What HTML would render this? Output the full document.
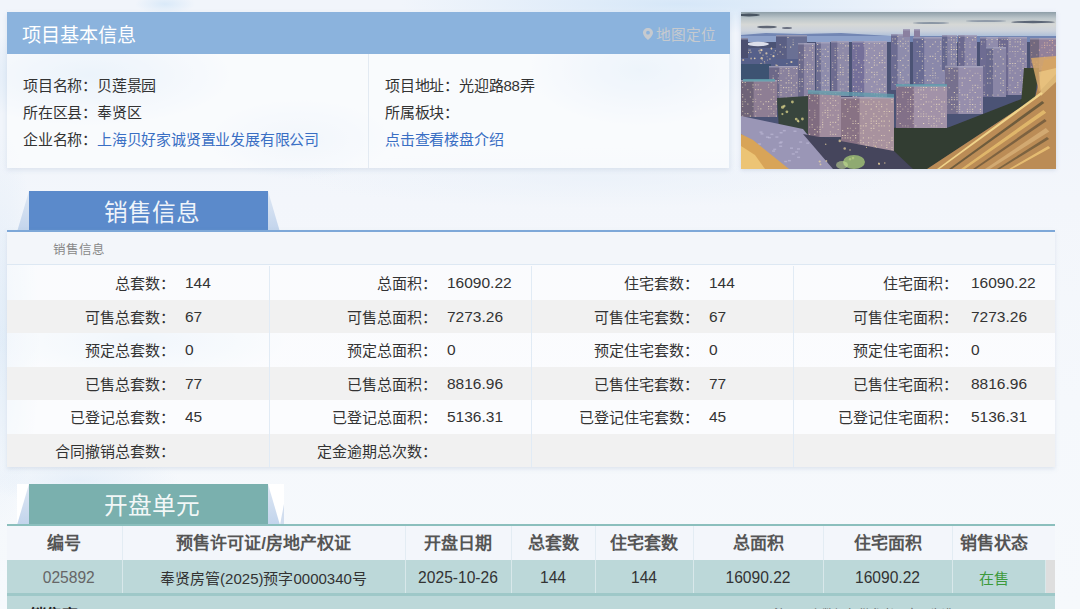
<!DOCTYPE html>
<html lang="zh-CN"><head><meta charset="utf-8">
<style>
*{box-sizing:border-box;margin:0;padding:0}
html,body{width:1080px;height:609px;overflow:hidden}
body{font-family:"Liberation Sans",sans-serif;color:#333;position:relative;
background:#eef4fa;}
.bg{position:absolute;left:0;top:0;width:1080px;height:609px;
background:
radial-gradient(ellipse 30px 10px at 165px 4px,rgba(215,232,248,.9),rgba(215,232,248,0)),
radial-gradient(ellipse 280px 30px at 680px 4px,rgba(214,231,248,1),rgba(214,231,248,0)),
radial-gradient(ellipse 140px 50px at 90px 75px,rgba(205,225,245,.8),rgba(205,225,245,0)),
radial-gradient(ellipse 110px 55px at 640px 70px,rgba(205,225,245,.7),rgba(205,225,245,0)),
radial-gradient(ellipse 90px 40px at 300px 140px,rgba(215,230,246,.6),rgba(215,230,246,0)),
radial-gradient(ellipse 150px 40px at 140px 340px,rgba(210,228,246,.6),rgba(210,228,246,0)),
radial-gradient(ellipse 100px 25px at 80px 480px,rgba(215,230,246,.5),rgba(215,230,246,0)),
radial-gradient(ellipse 40px 200px at 0px 330px,rgba(214,230,246,.6),rgba(214,230,246,0)),
radial-gradient(ellipse 300px 30px at 600px 178px,rgba(232,240,249,.6),rgba(232,240,249,0)),
linear-gradient(180deg,#f1f5fb 0px,#f1f5fb 140px,#f3f6fb 200px,#f5f8fc 400px,#f6f9fc 609px);}
.abs{position:absolute}
/* info card */
.card{left:7px;top:12px;width:723px;height:156px;background:rgba(255,255,255,.55);border-right:1px solid #e4ecf5;box-shadow:0 2px 5px rgba(140,160,190,.22)}
.card .hd{position:absolute;left:0;top:0;width:723px;height:42px;background:#8bb3dd}
.card .hd .t{position:absolute;left:15px;top:12px;font-size:19.2px;color:#fff;line-height:24px}
.card .hd .map{position:absolute;left:636px;top:14px;font-size:14.67px;color:#c6cacf;line-height:18px}
.card .divv{position:absolute;left:361px;top:42px;width:1px;height:114px;background:#e3eaf2}
.ln{position:absolute;font-size:15px;letter-spacing:-0.2px;line-height:18px;color:#333;white-space:nowrap}
.ln a{color:#3a6fc4;text-decoration:none}
.photo{left:741px;top:12px;width:315px;height:157px;overflow:hidden;box-shadow:0 1px 4px rgba(150,170,200,.35)}
/* tabs */
.tab{height:41px;width:280px}
.tab .side{position:absolute;top:0;left:0}
.tab .t{position:absolute;left:24px;width:239px;text-align:center;font-size:23.7px;color:rgba(255,255,255,.92);line-height:30px;top:7px}
/* sales panel */
.panel{left:7px;top:230px;width:1048px;height:237px;background:rgba(255,255,255,.55);border-top:2px solid #7ea8d8;box-shadow:0 2px 4px rgba(150,170,200,.25)}
.sub{position:absolute;left:0;top:0;width:1048px;height:33px;background:#f3f6fa;border-bottom:1px solid #dde8f3}
.sub span{position:absolute;left:46px;top:10px;font-size:12.5px;color:#888;line-height:16px}
table.s{position:absolute;left:0;top:34px;border-collapse:collapse;width:1048px;table-layout:fixed}
table.s td{height:33.5px;font-size:15px;color:#333;white-space:nowrap;padding:0}
table.s tr:nth-child(even) td{background:#f1f1f1}
table.s td.l{text-align:right;padding-right:2px}
table.s td.l4{padding-right:5.5px}
table.s td.v{padding-left:8px;border-right:1px solid #e1ebf5;font-size:15.5px;padding-top:1px}
table.s td.v:last-child{border-right:none}
/* units table */
.units{left:7px;top:524px;width:1048px;height:85px;border-top:2px solid #8bbfbd}
table.u{position:absolute;left:0;top:0;border-collapse:collapse;table-layout:fixed}
table.u th{height:34px;padding-bottom:3px;background:#f3f6fb;font-size:17px;font-weight:bold;color:#555;border-right:1px solid #e3ecf3}
table.u td{height:33px;padding-top:2px;background:#bcd8d9;font-size:15px;color:#333;text-align:center;border-right:1px solid #d8e8ea}
table.u th.sc{border-right:none}
table.u td.n{font-size:15.6px}
table.u td.sc{background:#dedede;border-right:none}
.foot{position:absolute;left:0;top:67px;width:1048px;height:20px;background:#bcd8d9;border-top:3px solid #9ec8c8}
.foot b{position:absolute;left:23px;top:10px;font-size:16px;color:#222;line-height:20px}
.foot span{position:absolute;left:767px;top:9px;font-size:12px;color:#666;line-height:20px}
</style></head><body>
<div class="bg"></div>

<div class="abs card">
  <div class="hd"><div class="t">项目基本信息</div>
    <div class="map"><svg width="10" height="12" viewBox="0 0 10 12" style="vertical-align:0px;margin-right:3px"><path d="M5 0C2.2 0 0 2.1 0 4.8 0 8.2 5 12 5 12s5-3.8 5-7.2C10 2.1 7.8 0 5 0zm0 6.6a1.9 1.9 0 1 1 0-3.8 1.9 1.9 0 0 1 0 3.8z" fill="#c6cacf"/></svg>地图定位</div>
  </div>
  <div class="divv"></div>
  <div class="ln" style="left:16px;top:65px">项目名称：贝莲景园</div>
  <div class="ln" style="left:16px;top:92px">所在区县：奉贤区</div>
  <div class="ln" style="left:16px;top:119px">企业名称：<a>上海贝好家诚贤置业发展有限公司</a></div>
  <div class="ln" style="left:378px;top:65px">项目地址：光迎路88弄</div>
  <div class="ln" style="left:378px;top:92px">所属板块：</div>
  <div class="ln" style="left:378px;top:119px"><a>点击查看楼盘介绍</a></div>
</div>

<div class="abs photo">
<svg width="315" height="157" viewBox="0 0 315 157">
<defs>
<linearGradient id="sky" x1="0" y1="0" x2="0" y2="1">
<stop offset="0" stop-color="#8e9ea8"/><stop offset=".04" stop-color="#bcc6ca"/><stop offset=".08" stop-color="#d6d8d6"/><stop offset=".12" stop-color="#ccd2dc"/><stop offset=".16" stop-color="#a8bcd8"/><stop offset=".2" stop-color="#94acd4"/><stop offset=".24" stop-color="#7a90c0"/><stop offset=".32" stop-color="#56628a"/><stop offset="1" stop-color="#3c3c4e"/>
</linearGradient>
<linearGradient id="rd" x1="1" y1="0" x2="0" y2="1"><stop offset="0" stop-color="#c89a5c"/><stop offset=".5" stop-color="#d8a458"/><stop offset="1" stop-color="#c0905a"/></linearGradient>
<filter id="bl" x="-5%" y="-5%" width="110%" height="110%"><feGaussianBlur stdDeviation="0.5"/></filter>
</defs>
<rect width="315" height="157" fill="url(#sky)"/>
<g filter="url(#bl)">
<ellipse cx="8" cy="3" rx="11" ry="1.4" fill="#4a5562"/>
<ellipse cx="26" cy="15" rx="10" ry="1.3" fill="#5e6674"/>
<ellipse cx="46" cy="16" rx="5" ry="1" fill="#6a7080"/>
<ellipse cx="190" cy="11" rx="18" ry="0.9" fill="#8a96a4"/>
<ellipse cx="245" cy="9" rx="20" ry="0.9" fill="#8f9aa8"/>
<ellipse cx="292" cy="10" rx="22" ry="1.2" fill="#5c6676"/>
<polygon points="0,23 25,21 60,22 100,21 150,24 315,24 315,34 0,34" fill="#7286b4"/>
<rect x="0" y="24" width="150" height="6" fill="#a8bce0" opacity=".5"/>
<rect x="0" y="30" width="315" height="85" fill="#4c5274"/>
<ellipse cx="17" cy="32" rx="11" ry="2.2" fill="#eceef8" opacity=".9"/>
<rect x="0" y="36" width="58" height="18" fill="#56608a"/>
<circle cx="18.1" cy="38.7" r="1.0" fill="#f0d8b0" opacity="0.44"/>
<circle cx="30.0" cy="42.6" r="0.5" fill="#f0d8b0" opacity="0.65"/>
<circle cx="2.1" cy="43.8" r="0.5" fill="#f0d8b0" opacity="0.45"/>
<circle cx="23.8" cy="50.9" r="0.6" fill="#f0d8b0" opacity="0.51"/>
<circle cx="35.1" cy="53.1" r="0.9" fill="#f0d8b0" opacity="0.60"/>
<circle cx="54.7" cy="36.8" r="1.1" fill="#f0d8b0" opacity="0.54"/>
<circle cx="8.1" cy="38.1" r="0.7" fill="#f0d8b0" opacity="0.81"/>
<circle cx="10.1" cy="46.5" r="0.9" fill="#f0d8b0" opacity="0.59"/>
<circle cx="30.7" cy="37.1" r="0.5" fill="#f0d8b0" opacity="0.50"/>
<circle cx="38.1" cy="43.7" r="0.7" fill="#f0d8b0" opacity="0.69"/>
<circle cx="25.4" cy="41.4" r="1.1" fill="#f0d8b0" opacity="0.75"/>
<circle cx="13.7" cy="46.3" r="0.9" fill="#f0d8b0" opacity="0.84"/>
<circle cx="40.8" cy="41.2" r="1.2" fill="#f0d8b0" opacity="0.46"/>
<circle cx="23.4" cy="49.6" r="0.6" fill="#f0d8b0" opacity="0.64"/>
<circle cx="2.2" cy="48.0" r="1.0" fill="#f0d8b0" opacity="0.69"/>
<circle cx="49.0" cy="41.6" r="1.0" fill="#f0d8b0" opacity="0.70"/>
<circle cx="32.5" cy="44.2" r="1.1" fill="#f0d8b0" opacity="0.87"/>
<circle cx="26.5" cy="48.0" r="0.5" fill="#f0d8b0" opacity="0.75"/>
<circle cx="36.2" cy="53.9" r="1.1" fill="#f0d8b0" opacity="0.54"/>
<circle cx="21.6" cy="48.0" r="0.5" fill="#f0d8b0" opacity="0.63"/>
<circle cx="9.4" cy="38.1" r="0.5" fill="#f0d8b0" opacity="0.78"/>
<circle cx="7.2" cy="40.5" r="0.8" fill="#f0d8b0" opacity="0.84"/>
<circle cx="4.5" cy="44.1" r="0.9" fill="#f0d8b0" opacity="0.84"/>
<circle cx="45.9" cy="51.6" r="0.7" fill="#f0d8b0" opacity="0.61"/>
<circle cx="20.1" cy="51.9" r="1.2" fill="#f0d8b0" opacity="0.48"/>
<circle cx="9.9" cy="40.2" r="0.7" fill="#f0d8b0" opacity="0.64"/>
<circle cx="33.0" cy="40.7" r="0.5" fill="#f0d8b0" opacity="0.61"/>
<circle cx="20.7" cy="46.2" r="1.2" fill="#f0d8b0" opacity="0.75"/>
<circle cx="28.9" cy="47.1" r="1.0" fill="#f0d8b0" opacity="0.43"/>
<circle cx="50.4" cy="50.0" r="1.1" fill="#f0d8b0" opacity="0.80"/>
<circle cx="22.0" cy="43.2" r="0.6" fill="#f0d8b0" opacity="0.72"/>
<circle cx="3.5" cy="37.2" r="0.6" fill="#f0d8b0" opacity="0.48"/>
<circle cx="19.0" cy="36.9" r="0.5" fill="#f0d8b0" opacity="0.48"/>
<circle cx="5.7" cy="42.5" r="0.5" fill="#f0d8b0" opacity="0.84"/>
<circle cx="34.4" cy="38.7" r="0.7" fill="#f0d8b0" opacity="0.57"/>
<circle cx="20.4" cy="38.2" r="1.1" fill="#f0d8b0" opacity="0.90"/>
<circle cx="26.1" cy="44.7" r="0.6" fill="#f0d8b0" opacity="0.45"/>
<circle cx="19.2" cy="40.8" r="1.1" fill="#f0d8b0" opacity="0.48"/>
<circle cx="1.3" cy="53.1" r="0.9" fill="#f0d8b0" opacity="0.47"/>
<circle cx="30.4" cy="36.5" r="0.9" fill="#f0d8b0" opacity="0.89"/>
<rect x="0" y="52" width="30" height="16" fill="#3e5272"/>
<rect x="0" y="26" width="7" height="20" fill="#4c5070"/>
<rect x="0" y="26" width="7" height="1.5" fill="#b0b0c8" opacity=".6"/>
<rect x="35" y="23" width="31" height="24" fill="#6a7094"/>
<rect x="35" y="23" width="10.8" height="24" fill="#5a5f84"/>
<rect x="35" y="23" width="31" height="1.5" fill="#b0b0c8" opacity=".6"/>
<rect x="46.4" y="25.0" width="1.2" height="1" fill="#f2e2c0" opacity="0.77"/>
<rect x="51.6" y="27.4" width="1.2" height="1" fill="#f2e2c0" opacity="0.37"/>
<rect x="51.6" y="29.8" width="1.2" height="1" fill="#f2e2c0" opacity="0.46"/>
<rect x="38.6" y="32.2" width="1.2" height="1" fill="#f2e2c0" opacity="0.71"/>
<rect x="51.6" y="32.2" width="1.2" height="1" fill="#f2e2c0" opacity="0.78"/>
<rect x="41.2" y="34.6" width="1.2" height="1" fill="#f2e2c0" opacity="0.42"/>
<rect x="43.8" y="34.6" width="1.2" height="1" fill="#f2e2c0" opacity="0.85"/>
<rect x="49.0" y="34.6" width="1.2" height="1" fill="#f2e2c0" opacity="0.80"/>
<rect x="62.0" y="34.6" width="1.2" height="1" fill="#f2e2c0" opacity="0.36"/>
<rect x="38.6" y="39.4" width="1.2" height="1" fill="#f2e2c0" opacity="0.85"/>
<rect x="64.6" y="39.4" width="1.2" height="1" fill="#f2e2c0" opacity="0.59"/>
<rect x="36.0" y="41.8" width="1.2" height="1" fill="#f2e2c0" opacity="0.35"/>
<rect x="41.2" y="41.8" width="1.2" height="1" fill="#f2e2c0" opacity="0.61"/>
<rect x="59.4" y="41.8" width="1.2" height="1" fill="#f2e2c0" opacity="0.66"/>
<rect x="57" y="31" width="17" height="60" fill="#8c86a4"/>
<rect x="57" y="31" width="5.9" height="60" fill="#6c6a8c"/>
<rect x="57" y="31" width="17" height="1.5" fill="#b0b0c8" opacity=".6"/>
<rect x="71.0" y="33.0" width="1.2" height="1" fill="#f2e2c0" opacity="0.66"/>
<rect x="63.2" y="35.4" width="1.2" height="1" fill="#f2e2c0" opacity="0.42"/>
<rect x="68.4" y="35.4" width="1.2" height="1" fill="#f2e2c0" opacity="0.48"/>
<rect x="71.0" y="35.4" width="1.2" height="1" fill="#f2e2c0" opacity="0.72"/>
<rect x="63.2" y="37.8" width="1.2" height="1" fill="#f2e2c0" opacity="0.74"/>
<rect x="68.4" y="37.8" width="1.2" height="1" fill="#f2e2c0" opacity="0.84"/>
<rect x="58.0" y="40.2" width="1.2" height="1" fill="#f2e2c0" opacity="0.87"/>
<rect x="71.0" y="40.2" width="1.2" height="1" fill="#f2e2c0" opacity="0.59"/>
<rect x="60.6" y="42.6" width="1.2" height="1" fill="#f2e2c0" opacity="0.46"/>
<rect x="63.2" y="42.6" width="1.2" height="1" fill="#f2e2c0" opacity="0.75"/>
<rect x="65.8" y="42.6" width="1.2" height="1" fill="#f2e2c0" opacity="0.65"/>
<rect x="71.0" y="42.6" width="1.2" height="1" fill="#f2e2c0" opacity="0.53"/>
<rect x="63.2" y="45.0" width="1.2" height="1" fill="#f2e2c0" opacity="0.89"/>
<rect x="71.0" y="45.0" width="1.2" height="1" fill="#f2e2c0" opacity="0.50"/>
<rect x="58.0" y="47.4" width="1.2" height="1" fill="#f2e2c0" opacity="0.78"/>
<rect x="60.6" y="47.4" width="1.2" height="1" fill="#f2e2c0" opacity="0.42"/>
<rect x="71.0" y="47.4" width="1.2" height="1" fill="#f2e2c0" opacity="0.43"/>
<rect x="65.8" y="49.8" width="1.2" height="1" fill="#f2e2c0" opacity="0.38"/>
<rect x="58.0" y="52.2" width="1.2" height="1" fill="#f2e2c0" opacity="0.87"/>
<rect x="65.8" y="52.2" width="1.2" height="1" fill="#f2e2c0" opacity="0.82"/>
<rect x="68.4" y="52.2" width="1.2" height="1" fill="#f2e2c0" opacity="0.82"/>
<rect x="58.0" y="54.6" width="1.2" height="1" fill="#f2e2c0" opacity="0.65"/>
<rect x="63.2" y="54.6" width="1.2" height="1" fill="#f2e2c0" opacity="0.42"/>
<rect x="68.4" y="54.6" width="1.2" height="1" fill="#f2e2c0" opacity="0.41"/>
<rect x="71.0" y="54.6" width="1.2" height="1" fill="#f2e2c0" opacity="0.38"/>
<rect x="58.0" y="57.0" width="1.2" height="1" fill="#f2e2c0" opacity="0.52"/>
<rect x="60.6" y="57.0" width="1.2" height="1" fill="#f2e2c0" opacity="0.77"/>
<rect x="63.2" y="57.0" width="1.2" height="1" fill="#f2e2c0" opacity="0.63"/>
<rect x="65.8" y="57.0" width="1.2" height="1" fill="#f2e2c0" opacity="0.54"/>
<rect x="68.4" y="57.0" width="1.2" height="1" fill="#f2e2c0" opacity="0.49"/>
<rect x="71.0" y="57.0" width="1.2" height="1" fill="#f2e2c0" opacity="0.75"/>
<rect x="60.6" y="59.4" width="1.2" height="1" fill="#f2e2c0" opacity="0.61"/>
<rect x="65.8" y="59.4" width="1.2" height="1" fill="#f2e2c0" opacity="0.80"/>
<rect x="71.0" y="61.8" width="1.2" height="1" fill="#f2e2c0" opacity="0.81"/>
<rect x="65.8" y="64.2" width="1.2" height="1" fill="#f2e2c0" opacity="0.38"/>
<rect x="68.4" y="64.2" width="1.2" height="1" fill="#f2e2c0" opacity="0.39"/>
<rect x="58.0" y="66.6" width="1.2" height="1" fill="#f2e2c0" opacity="0.44"/>
<rect x="60.6" y="66.6" width="1.2" height="1" fill="#f2e2c0" opacity="0.81"/>
<rect x="68.4" y="66.6" width="1.2" height="1" fill="#f2e2c0" opacity="0.48"/>
<rect x="71.0" y="66.6" width="1.2" height="1" fill="#f2e2c0" opacity="0.60"/>
<rect x="58.0" y="69.0" width="1.2" height="1" fill="#f2e2c0" opacity="0.60"/>
<rect x="60.6" y="69.0" width="1.2" height="1" fill="#f2e2c0" opacity="0.88"/>
<rect x="68.4" y="69.0" width="1.2" height="1" fill="#f2e2c0" opacity="0.88"/>
<rect x="71.0" y="69.0" width="1.2" height="1" fill="#f2e2c0" opacity="0.55"/>
<rect x="58.0" y="71.4" width="1.2" height="1" fill="#f2e2c0" opacity="0.56"/>
<rect x="65.8" y="71.4" width="1.2" height="1" fill="#f2e2c0" opacity="0.63"/>
<rect x="68.4" y="71.4" width="1.2" height="1" fill="#f2e2c0" opacity="0.50"/>
<rect x="71.0" y="71.4" width="1.2" height="1" fill="#f2e2c0" opacity="0.57"/>
<rect x="58.0" y="73.8" width="1.2" height="1" fill="#f2e2c0" opacity="0.36"/>
<rect x="60.6" y="73.8" width="1.2" height="1" fill="#f2e2c0" opacity="0.48"/>
<rect x="65.8" y="76.2" width="1.2" height="1" fill="#f2e2c0" opacity="0.89"/>
<rect x="68.4" y="76.2" width="1.2" height="1" fill="#f2e2c0" opacity="0.75"/>
<rect x="58.0" y="78.6" width="1.2" height="1" fill="#f2e2c0" opacity="0.81"/>
<rect x="71.0" y="78.6" width="1.2" height="1" fill="#f2e2c0" opacity="0.64"/>
<rect x="63.2" y="83.4" width="1.2" height="1" fill="#f2e2c0" opacity="0.37"/>
<rect x="65.8" y="83.4" width="1.2" height="1" fill="#f2e2c0" opacity="0.55"/>
<rect x="68.4" y="83.4" width="1.2" height="1" fill="#f2e2c0" opacity="0.81"/>
<rect x="68.4" y="85.8" width="1.2" height="1" fill="#f2e2c0" opacity="0.79"/>
<rect x="65.8" y="88.2" width="1.2" height="1" fill="#f2e2c0" opacity="0.76"/>
<rect x="68.4" y="88.2" width="1.2" height="1" fill="#f2e2c0" opacity="0.39"/>
<rect x="71.0" y="88.2" width="1.2" height="1" fill="#f2e2c0" opacity="0.75"/>
<rect x="75" y="30" width="14" height="58" fill="#8e8cac"/>
<rect x="75" y="30" width="4.9" height="58" fill="#6e6e92"/>
<rect x="75" y="30" width="14" height="1.5" fill="#b0b0c8" opacity=".6"/>
<rect x="76.0" y="32.0" width="1.2" height="1" fill="#f2e2c0" opacity="0.76"/>
<rect x="86.4" y="34.4" width="1.2" height="1" fill="#f2e2c0" opacity="0.43"/>
<rect x="76.0" y="36.8" width="1.2" height="1" fill="#f2e2c0" opacity="0.76"/>
<rect x="78.6" y="36.8" width="1.2" height="1" fill="#f2e2c0" opacity="0.66"/>
<rect x="81.2" y="36.8" width="1.2" height="1" fill="#f2e2c0" opacity="0.38"/>
<rect x="83.8" y="36.8" width="1.2" height="1" fill="#f2e2c0" opacity="0.72"/>
<rect x="78.6" y="39.2" width="1.2" height="1" fill="#f2e2c0" opacity="0.63"/>
<rect x="86.4" y="39.2" width="1.2" height="1" fill="#f2e2c0" opacity="0.84"/>
<rect x="76.0" y="41.6" width="1.2" height="1" fill="#f2e2c0" opacity="0.89"/>
<rect x="81.2" y="41.6" width="1.2" height="1" fill="#f2e2c0" opacity="0.60"/>
<rect x="78.6" y="44.0" width="1.2" height="1" fill="#f2e2c0" opacity="0.47"/>
<rect x="83.8" y="44.0" width="1.2" height="1" fill="#f2e2c0" opacity="0.67"/>
<rect x="86.4" y="44.0" width="1.2" height="1" fill="#f2e2c0" opacity="0.64"/>
<rect x="78.6" y="46.4" width="1.2" height="1" fill="#f2e2c0" opacity="0.80"/>
<rect x="76.0" y="48.8" width="1.2" height="1" fill="#f2e2c0" opacity="0.84"/>
<rect x="81.2" y="48.8" width="1.2" height="1" fill="#f2e2c0" opacity="0.35"/>
<rect x="76.0" y="51.2" width="1.2" height="1" fill="#f2e2c0" opacity="0.43"/>
<rect x="78.6" y="51.2" width="1.2" height="1" fill="#f2e2c0" opacity="0.52"/>
<rect x="83.8" y="51.2" width="1.2" height="1" fill="#f2e2c0" opacity="0.76"/>
<rect x="76.0" y="53.6" width="1.2" height="1" fill="#f2e2c0" opacity="0.86"/>
<rect x="83.8" y="53.6" width="1.2" height="1" fill="#f2e2c0" opacity="0.55"/>
<rect x="86.4" y="56.0" width="1.2" height="1" fill="#f2e2c0" opacity="0.38"/>
<rect x="76.0" y="58.4" width="1.2" height="1" fill="#f2e2c0" opacity="0.81"/>
<rect x="78.6" y="58.4" width="1.2" height="1" fill="#f2e2c0" opacity="0.86"/>
<rect x="81.2" y="58.4" width="1.2" height="1" fill="#f2e2c0" opacity="0.50"/>
<rect x="86.4" y="58.4" width="1.2" height="1" fill="#f2e2c0" opacity="0.56"/>
<rect x="83.8" y="63.2" width="1.2" height="1" fill="#f2e2c0" opacity="0.75"/>
<rect x="81.2" y="65.6" width="1.2" height="1" fill="#f2e2c0" opacity="0.38"/>
<rect x="86.4" y="65.6" width="1.2" height="1" fill="#f2e2c0" opacity="0.61"/>
<rect x="76.0" y="68.0" width="1.2" height="1" fill="#f2e2c0" opacity="0.51"/>
<rect x="83.8" y="68.0" width="1.2" height="1" fill="#f2e2c0" opacity="0.71"/>
<rect x="86.4" y="68.0" width="1.2" height="1" fill="#f2e2c0" opacity="0.66"/>
<rect x="78.6" y="70.4" width="1.2" height="1" fill="#f2e2c0" opacity="0.44"/>
<rect x="81.2" y="70.4" width="1.2" height="1" fill="#f2e2c0" opacity="0.85"/>
<rect x="86.4" y="70.4" width="1.2" height="1" fill="#f2e2c0" opacity="0.85"/>
<rect x="81.2" y="72.8" width="1.2" height="1" fill="#f2e2c0" opacity="0.46"/>
<rect x="83.8" y="72.8" width="1.2" height="1" fill="#f2e2c0" opacity="0.54"/>
<rect x="86.4" y="72.8" width="1.2" height="1" fill="#f2e2c0" opacity="0.48"/>
<rect x="76.0" y="75.2" width="1.2" height="1" fill="#f2e2c0" opacity="0.66"/>
<rect x="81.2" y="77.6" width="1.2" height="1" fill="#f2e2c0" opacity="0.38"/>
<rect x="83.8" y="77.6" width="1.2" height="1" fill="#f2e2c0" opacity="0.88"/>
<rect x="86.4" y="77.6" width="1.2" height="1" fill="#f2e2c0" opacity="0.63"/>
<rect x="81.2" y="80.0" width="1.2" height="1" fill="#f2e2c0" opacity="0.50"/>
<rect x="83.8" y="80.0" width="1.2" height="1" fill="#f2e2c0" opacity="0.57"/>
<rect x="83.8" y="82.4" width="1.2" height="1" fill="#f2e2c0" opacity="0.37"/>
<rect x="83.8" y="84.8" width="1.2" height="1" fill="#f2e2c0" opacity="0.57"/>
<rect x="90" y="29" width="18" height="55" fill="#8e8aa8"/>
<rect x="90" y="29" width="6.3" height="55" fill="#6e6c90"/>
<rect x="90" y="29" width="18" height="1.5" fill="#b0b0c8" opacity=".6"/>
<rect x="98.8" y="31.0" width="1.2" height="1" fill="#f2e2c0" opacity="0.41"/>
<rect x="101.4" y="31.0" width="1.2" height="1" fill="#f2e2c0" opacity="0.64"/>
<rect x="104.0" y="33.4" width="1.2" height="1" fill="#f2e2c0" opacity="0.78"/>
<rect x="106.6" y="33.4" width="1.2" height="1" fill="#f2e2c0" opacity="0.86"/>
<rect x="93.6" y="35.8" width="1.2" height="1" fill="#f2e2c0" opacity="0.42"/>
<rect x="96.2" y="35.8" width="1.2" height="1" fill="#f2e2c0" opacity="0.70"/>
<rect x="101.4" y="35.8" width="1.2" height="1" fill="#f2e2c0" opacity="0.39"/>
<rect x="93.6" y="38.2" width="1.2" height="1" fill="#f2e2c0" opacity="0.68"/>
<rect x="96.2" y="38.2" width="1.2" height="1" fill="#f2e2c0" opacity="0.52"/>
<rect x="93.6" y="40.6" width="1.2" height="1" fill="#f2e2c0" opacity="0.49"/>
<rect x="101.4" y="40.6" width="1.2" height="1" fill="#f2e2c0" opacity="0.36"/>
<rect x="93.6" y="43.0" width="1.2" height="1" fill="#f2e2c0" opacity="0.72"/>
<rect x="98.8" y="43.0" width="1.2" height="1" fill="#f2e2c0" opacity="0.37"/>
<rect x="101.4" y="43.0" width="1.2" height="1" fill="#f2e2c0" opacity="0.58"/>
<rect x="106.6" y="43.0" width="1.2" height="1" fill="#f2e2c0" opacity="0.79"/>
<rect x="96.2" y="45.4" width="1.2" height="1" fill="#f2e2c0" opacity="0.88"/>
<rect x="98.8" y="45.4" width="1.2" height="1" fill="#f2e2c0" opacity="0.80"/>
<rect x="101.4" y="45.4" width="1.2" height="1" fill="#f2e2c0" opacity="0.47"/>
<rect x="106.6" y="45.4" width="1.2" height="1" fill="#f2e2c0" opacity="0.87"/>
<rect x="93.6" y="47.8" width="1.2" height="1" fill="#f2e2c0" opacity="0.47"/>
<rect x="104.0" y="47.8" width="1.2" height="1" fill="#f2e2c0" opacity="0.57"/>
<rect x="106.6" y="47.8" width="1.2" height="1" fill="#f2e2c0" opacity="0.89"/>
<rect x="91.0" y="50.2" width="1.2" height="1" fill="#f2e2c0" opacity="0.38"/>
<rect x="93.6" y="50.2" width="1.2" height="1" fill="#f2e2c0" opacity="0.57"/>
<rect x="91.0" y="52.6" width="1.2" height="1" fill="#f2e2c0" opacity="0.45"/>
<rect x="98.8" y="52.6" width="1.2" height="1" fill="#f2e2c0" opacity="0.72"/>
<rect x="106.6" y="52.6" width="1.2" height="1" fill="#f2e2c0" opacity="0.44"/>
<rect x="91.0" y="55.0" width="1.2" height="1" fill="#f2e2c0" opacity="0.50"/>
<rect x="98.8" y="55.0" width="1.2" height="1" fill="#f2e2c0" opacity="0.88"/>
<rect x="101.4" y="55.0" width="1.2" height="1" fill="#f2e2c0" opacity="0.55"/>
<rect x="93.6" y="57.4" width="1.2" height="1" fill="#f2e2c0" opacity="0.61"/>
<rect x="101.4" y="57.4" width="1.2" height="1" fill="#f2e2c0" opacity="0.55"/>
<rect x="106.6" y="57.4" width="1.2" height="1" fill="#f2e2c0" opacity="0.58"/>
<rect x="96.2" y="59.8" width="1.2" height="1" fill="#f2e2c0" opacity="0.37"/>
<rect x="98.8" y="59.8" width="1.2" height="1" fill="#f2e2c0" opacity="0.86"/>
<rect x="101.4" y="59.8" width="1.2" height="1" fill="#f2e2c0" opacity="0.76"/>
<rect x="106.6" y="59.8" width="1.2" height="1" fill="#f2e2c0" opacity="0.50"/>
<rect x="96.2" y="62.2" width="1.2" height="1" fill="#f2e2c0" opacity="0.74"/>
<rect x="98.8" y="62.2" width="1.2" height="1" fill="#f2e2c0" opacity="0.50"/>
<rect x="101.4" y="62.2" width="1.2" height="1" fill="#f2e2c0" opacity="0.77"/>
<rect x="93.6" y="64.6" width="1.2" height="1" fill="#f2e2c0" opacity="0.48"/>
<rect x="106.6" y="64.6" width="1.2" height="1" fill="#f2e2c0" opacity="0.59"/>
<rect x="96.2" y="67.0" width="1.2" height="1" fill="#f2e2c0" opacity="0.79"/>
<rect x="91.0" y="69.4" width="1.2" height="1" fill="#f2e2c0" opacity="0.53"/>
<rect x="98.8" y="69.4" width="1.2" height="1" fill="#f2e2c0" opacity="0.46"/>
<rect x="104.0" y="69.4" width="1.2" height="1" fill="#f2e2c0" opacity="0.39"/>
<rect x="106.6" y="69.4" width="1.2" height="1" fill="#f2e2c0" opacity="0.65"/>
<rect x="91.0" y="71.8" width="1.2" height="1" fill="#f2e2c0" opacity="0.89"/>
<rect x="98.8" y="71.8" width="1.2" height="1" fill="#f2e2c0" opacity="0.40"/>
<rect x="101.4" y="71.8" width="1.2" height="1" fill="#f2e2c0" opacity="0.62"/>
<rect x="91.0" y="74.2" width="1.2" height="1" fill="#f2e2c0" opacity="0.58"/>
<rect x="106.6" y="74.2" width="1.2" height="1" fill="#f2e2c0" opacity="0.81"/>
<rect x="91.0" y="76.6" width="1.2" height="1" fill="#f2e2c0" opacity="0.66"/>
<rect x="98.8" y="76.6" width="1.2" height="1" fill="#f2e2c0" opacity="0.49"/>
<rect x="101.4" y="76.6" width="1.2" height="1" fill="#f2e2c0" opacity="0.43"/>
<rect x="91.0" y="79.0" width="1.2" height="1" fill="#f2e2c0" opacity="0.57"/>
<rect x="98.8" y="79.0" width="1.2" height="1" fill="#f2e2c0" opacity="0.79"/>
<rect x="106.6" y="79.0" width="1.2" height="1" fill="#f2e2c0" opacity="0.61"/>
<rect x="98.8" y="81.4" width="1.2" height="1" fill="#f2e2c0" opacity="0.51"/>
<rect x="101.4" y="81.4" width="1.2" height="1" fill="#f2e2c0" opacity="0.45"/>
<rect x="111" y="29" width="35" height="58" fill="#9690ae"/>
<rect x="111" y="29" width="12.2" height="58" fill="#74709a"/>
<rect x="111" y="29" width="35" height="1.5" fill="#b0b0c8" opacity=".6"/>
<rect x="122.4" y="31.0" width="1.2" height="1" fill="#f2e2c0" opacity="0.78"/>
<rect x="127.6" y="31.0" width="1.2" height="1" fill="#f2e2c0" opacity="0.68"/>
<rect x="132.8" y="31.0" width="1.2" height="1" fill="#f2e2c0" opacity="0.55"/>
<rect x="135.4" y="31.0" width="1.2" height="1" fill="#f2e2c0" opacity="0.46"/>
<rect x="138.0" y="31.0" width="1.2" height="1" fill="#f2e2c0" opacity="0.68"/>
<rect x="143.2" y="31.0" width="1.2" height="1" fill="#f2e2c0" opacity="0.36"/>
<rect x="112.0" y="33.4" width="1.2" height="1" fill="#f2e2c0" opacity="0.72"/>
<rect x="114.6" y="33.4" width="1.2" height="1" fill="#f2e2c0" opacity="0.52"/>
<rect x="117.2" y="33.4" width="1.2" height="1" fill="#f2e2c0" opacity="0.79"/>
<rect x="122.4" y="33.4" width="1.2" height="1" fill="#f2e2c0" opacity="0.41"/>
<rect x="132.8" y="33.4" width="1.2" height="1" fill="#f2e2c0" opacity="0.44"/>
<rect x="140.6" y="33.4" width="1.2" height="1" fill="#f2e2c0" opacity="0.52"/>
<rect x="112.0" y="35.8" width="1.2" height="1" fill="#f2e2c0" opacity="0.66"/>
<rect x="127.6" y="35.8" width="1.2" height="1" fill="#f2e2c0" opacity="0.75"/>
<rect x="130.2" y="35.8" width="1.2" height="1" fill="#f2e2c0" opacity="0.35"/>
<rect x="114.6" y="38.2" width="1.2" height="1" fill="#f2e2c0" opacity="0.36"/>
<rect x="125.0" y="38.2" width="1.2" height="1" fill="#f2e2c0" opacity="0.69"/>
<rect x="132.8" y="38.2" width="1.2" height="1" fill="#f2e2c0" opacity="0.51"/>
<rect x="140.6" y="38.2" width="1.2" height="1" fill="#f2e2c0" opacity="0.62"/>
<rect x="114.6" y="40.6" width="1.2" height="1" fill="#f2e2c0" opacity="0.42"/>
<rect x="125.0" y="40.6" width="1.2" height="1" fill="#f2e2c0" opacity="0.86"/>
<rect x="138.0" y="40.6" width="1.2" height="1" fill="#f2e2c0" opacity="0.78"/>
<rect x="140.6" y="40.6" width="1.2" height="1" fill="#f2e2c0" opacity="0.57"/>
<rect x="114.6" y="43.0" width="1.2" height="1" fill="#f2e2c0" opacity="0.47"/>
<rect x="125.0" y="43.0" width="1.2" height="1" fill="#f2e2c0" opacity="0.49"/>
<rect x="132.8" y="43.0" width="1.2" height="1" fill="#f2e2c0" opacity="0.66"/>
<rect x="138.0" y="43.0" width="1.2" height="1" fill="#f2e2c0" opacity="0.81"/>
<rect x="140.6" y="43.0" width="1.2" height="1" fill="#f2e2c0" opacity="0.68"/>
<rect x="114.6" y="45.4" width="1.2" height="1" fill="#f2e2c0" opacity="0.58"/>
<rect x="130.2" y="45.4" width="1.2" height="1" fill="#f2e2c0" opacity="0.69"/>
<rect x="135.4" y="45.4" width="1.2" height="1" fill="#f2e2c0" opacity="0.77"/>
<rect x="143.2" y="45.4" width="1.2" height="1" fill="#f2e2c0" opacity="0.61"/>
<rect x="112.0" y="47.8" width="1.2" height="1" fill="#f2e2c0" opacity="0.42"/>
<rect x="117.2" y="47.8" width="1.2" height="1" fill="#f2e2c0" opacity="0.59"/>
<rect x="122.4" y="47.8" width="1.2" height="1" fill="#f2e2c0" opacity="0.70"/>
<rect x="125.0" y="47.8" width="1.2" height="1" fill="#f2e2c0" opacity="0.75"/>
<rect x="132.8" y="47.8" width="1.2" height="1" fill="#f2e2c0" opacity="0.63"/>
<rect x="140.6" y="47.8" width="1.2" height="1" fill="#f2e2c0" opacity="0.82"/>
<rect x="117.2" y="50.2" width="1.2" height="1" fill="#f2e2c0" opacity="0.89"/>
<rect x="127.6" y="50.2" width="1.2" height="1" fill="#f2e2c0" opacity="0.78"/>
<rect x="132.8" y="50.2" width="1.2" height="1" fill="#f2e2c0" opacity="0.54"/>
<rect x="138.0" y="50.2" width="1.2" height="1" fill="#f2e2c0" opacity="0.84"/>
<rect x="140.6" y="50.2" width="1.2" height="1" fill="#f2e2c0" opacity="0.80"/>
<rect x="143.2" y="50.2" width="1.2" height="1" fill="#f2e2c0" opacity="0.63"/>
<rect x="114.6" y="52.6" width="1.2" height="1" fill="#f2e2c0" opacity="0.49"/>
<rect x="119.8" y="52.6" width="1.2" height="1" fill="#f2e2c0" opacity="0.37"/>
<rect x="122.4" y="52.6" width="1.2" height="1" fill="#f2e2c0" opacity="0.44"/>
<rect x="132.8" y="52.6" width="1.2" height="1" fill="#f2e2c0" opacity="0.78"/>
<rect x="135.4" y="52.6" width="1.2" height="1" fill="#f2e2c0" opacity="0.64"/>
<rect x="119.8" y="55.0" width="1.2" height="1" fill="#f2e2c0" opacity="0.90"/>
<rect x="130.2" y="55.0" width="1.2" height="1" fill="#f2e2c0" opacity="0.89"/>
<rect x="143.2" y="55.0" width="1.2" height="1" fill="#f2e2c0" opacity="0.76"/>
<rect x="112.0" y="57.4" width="1.2" height="1" fill="#f2e2c0" opacity="0.80"/>
<rect x="114.6" y="57.4" width="1.2" height="1" fill="#f2e2c0" opacity="0.70"/>
<rect x="125.0" y="57.4" width="1.2" height="1" fill="#f2e2c0" opacity="0.35"/>
<rect x="127.6" y="57.4" width="1.2" height="1" fill="#f2e2c0" opacity="0.43"/>
<rect x="140.6" y="57.4" width="1.2" height="1" fill="#f2e2c0" opacity="0.47"/>
<rect x="112.0" y="59.8" width="1.2" height="1" fill="#f2e2c0" opacity="0.35"/>
<rect x="117.2" y="59.8" width="1.2" height="1" fill="#f2e2c0" opacity="0.55"/>
<rect x="119.8" y="59.8" width="1.2" height="1" fill="#f2e2c0" opacity="0.67"/>
<rect x="125.0" y="59.8" width="1.2" height="1" fill="#f2e2c0" opacity="0.69"/>
<rect x="130.2" y="59.8" width="1.2" height="1" fill="#f2e2c0" opacity="0.87"/>
<rect x="132.8" y="59.8" width="1.2" height="1" fill="#f2e2c0" opacity="0.43"/>
<rect x="135.4" y="59.8" width="1.2" height="1" fill="#f2e2c0" opacity="0.70"/>
<rect x="112.0" y="62.2" width="1.2" height="1" fill="#f2e2c0" opacity="0.36"/>
<rect x="132.8" y="62.2" width="1.2" height="1" fill="#f2e2c0" opacity="0.85"/>
<rect x="135.4" y="62.2" width="1.2" height="1" fill="#f2e2c0" opacity="0.64"/>
<rect x="140.6" y="62.2" width="1.2" height="1" fill="#f2e2c0" opacity="0.38"/>
<rect x="112.0" y="64.6" width="1.2" height="1" fill="#f2e2c0" opacity="0.65"/>
<rect x="117.2" y="64.6" width="1.2" height="1" fill="#f2e2c0" opacity="0.46"/>
<rect x="130.2" y="64.6" width="1.2" height="1" fill="#f2e2c0" opacity="0.52"/>
<rect x="132.8" y="64.6" width="1.2" height="1" fill="#f2e2c0" opacity="0.38"/>
<rect x="143.2" y="64.6" width="1.2" height="1" fill="#f2e2c0" opacity="0.81"/>
<rect x="122.4" y="67.0" width="1.2" height="1" fill="#f2e2c0" opacity="0.41"/>
<rect x="125.0" y="67.0" width="1.2" height="1" fill="#f2e2c0" opacity="0.37"/>
<rect x="127.6" y="67.0" width="1.2" height="1" fill="#f2e2c0" opacity="0.76"/>
<rect x="138.0" y="67.0" width="1.2" height="1" fill="#f2e2c0" opacity="0.65"/>
<rect x="114.6" y="69.4" width="1.2" height="1" fill="#f2e2c0" opacity="0.70"/>
<rect x="119.8" y="69.4" width="1.2" height="1" fill="#f2e2c0" opacity="0.83"/>
<rect x="122.4" y="69.4" width="1.2" height="1" fill="#f2e2c0" opacity="0.49"/>
<rect x="125.0" y="69.4" width="1.2" height="1" fill="#f2e2c0" opacity="0.76"/>
<rect x="132.8" y="69.4" width="1.2" height="1" fill="#f2e2c0" opacity="0.83"/>
<rect x="135.4" y="69.4" width="1.2" height="1" fill="#f2e2c0" opacity="0.48"/>
<rect x="135.4" y="71.8" width="1.2" height="1" fill="#f2e2c0" opacity="0.47"/>
<rect x="140.6" y="71.8" width="1.2" height="1" fill="#f2e2c0" opacity="0.85"/>
<rect x="143.2" y="71.8" width="1.2" height="1" fill="#f2e2c0" opacity="0.36"/>
<rect x="112.0" y="74.2" width="1.2" height="1" fill="#f2e2c0" opacity="0.86"/>
<rect x="114.6" y="74.2" width="1.2" height="1" fill="#f2e2c0" opacity="0.43"/>
<rect x="117.2" y="74.2" width="1.2" height="1" fill="#f2e2c0" opacity="0.37"/>
<rect x="130.2" y="74.2" width="1.2" height="1" fill="#f2e2c0" opacity="0.67"/>
<rect x="143.2" y="74.2" width="1.2" height="1" fill="#f2e2c0" opacity="0.83"/>
<rect x="117.2" y="76.6" width="1.2" height="1" fill="#f2e2c0" opacity="0.46"/>
<rect x="119.8" y="76.6" width="1.2" height="1" fill="#f2e2c0" opacity="0.37"/>
<rect x="135.4" y="76.6" width="1.2" height="1" fill="#f2e2c0" opacity="0.40"/>
<rect x="138.0" y="76.6" width="1.2" height="1" fill="#f2e2c0" opacity="0.77"/>
<rect x="140.6" y="76.6" width="1.2" height="1" fill="#f2e2c0" opacity="0.53"/>
<rect x="112.0" y="79.0" width="1.2" height="1" fill="#f2e2c0" opacity="0.49"/>
<rect x="114.6" y="79.0" width="1.2" height="1" fill="#f2e2c0" opacity="0.74"/>
<rect x="119.8" y="79.0" width="1.2" height="1" fill="#f2e2c0" opacity="0.88"/>
<rect x="130.2" y="79.0" width="1.2" height="1" fill="#f2e2c0" opacity="0.58"/>
<rect x="138.0" y="79.0" width="1.2" height="1" fill="#f2e2c0" opacity="0.74"/>
<rect x="143.2" y="79.0" width="1.2" height="1" fill="#f2e2c0" opacity="0.82"/>
<rect x="112.0" y="81.4" width="1.2" height="1" fill="#f2e2c0" opacity="0.80"/>
<rect x="114.6" y="81.4" width="1.2" height="1" fill="#f2e2c0" opacity="0.35"/>
<rect x="117.2" y="81.4" width="1.2" height="1" fill="#f2e2c0" opacity="0.77"/>
<rect x="122.4" y="81.4" width="1.2" height="1" fill="#f2e2c0" opacity="0.62"/>
<rect x="130.2" y="81.4" width="1.2" height="1" fill="#f2e2c0" opacity="0.62"/>
<rect x="132.8" y="81.4" width="1.2" height="1" fill="#f2e2c0" opacity="0.81"/>
<rect x="135.4" y="81.4" width="1.2" height="1" fill="#f2e2c0" opacity="0.87"/>
<rect x="138.0" y="81.4" width="1.2" height="1" fill="#f2e2c0" opacity="0.47"/>
<rect x="112.0" y="83.8" width="1.2" height="1" fill="#f2e2c0" opacity="0.70"/>
<rect x="114.6" y="83.8" width="1.2" height="1" fill="#f2e2c0" opacity="0.78"/>
<rect x="135.4" y="83.8" width="1.2" height="1" fill="#f2e2c0" opacity="0.84"/>
<rect x="138.0" y="83.8" width="1.2" height="1" fill="#f2e2c0" opacity="0.46"/>
<rect x="140.6" y="83.8" width="1.2" height="1" fill="#f2e2c0" opacity="0.85"/>
<rect x="150" y="22" width="19" height="56" fill="#8e8cac"/>
<rect x="150" y="22" width="6.6" height="56" fill="#6c6c92"/>
<rect x="150" y="22" width="19" height="1.5" fill="#b0b0c8" opacity=".6"/>
<rect x="156.2" y="24.0" width="1.2" height="1" fill="#f2e2c0" opacity="0.60"/>
<rect x="151.0" y="26.4" width="1.2" height="1" fill="#f2e2c0" opacity="0.53"/>
<rect x="153.6" y="26.4" width="1.2" height="1" fill="#f2e2c0" opacity="0.81"/>
<rect x="161.4" y="26.4" width="1.2" height="1" fill="#f2e2c0" opacity="0.59"/>
<rect x="151.0" y="28.8" width="1.2" height="1" fill="#f2e2c0" opacity="0.60"/>
<rect x="156.2" y="28.8" width="1.2" height="1" fill="#f2e2c0" opacity="0.46"/>
<rect x="158.8" y="28.8" width="1.2" height="1" fill="#f2e2c0" opacity="0.74"/>
<rect x="164.0" y="28.8" width="1.2" height="1" fill="#f2e2c0" opacity="0.44"/>
<rect x="166.6" y="28.8" width="1.2" height="1" fill="#f2e2c0" opacity="0.53"/>
<rect x="153.6" y="31.2" width="1.2" height="1" fill="#f2e2c0" opacity="0.53"/>
<rect x="156.2" y="31.2" width="1.2" height="1" fill="#f2e2c0" opacity="0.89"/>
<rect x="161.4" y="31.2" width="1.2" height="1" fill="#f2e2c0" opacity="0.88"/>
<rect x="164.0" y="31.2" width="1.2" height="1" fill="#f2e2c0" opacity="0.56"/>
<rect x="158.8" y="33.6" width="1.2" height="1" fill="#f2e2c0" opacity="0.70"/>
<rect x="161.4" y="33.6" width="1.2" height="1" fill="#f2e2c0" opacity="0.46"/>
<rect x="166.6" y="33.6" width="1.2" height="1" fill="#f2e2c0" opacity="0.57"/>
<rect x="164.0" y="36.0" width="1.2" height="1" fill="#f2e2c0" opacity="0.68"/>
<rect x="166.6" y="38.4" width="1.2" height="1" fill="#f2e2c0" opacity="0.75"/>
<rect x="151.0" y="43.2" width="1.2" height="1" fill="#f2e2c0" opacity="0.70"/>
<rect x="153.6" y="43.2" width="1.2" height="1" fill="#f2e2c0" opacity="0.58"/>
<rect x="164.0" y="43.2" width="1.2" height="1" fill="#f2e2c0" opacity="0.58"/>
<rect x="161.4" y="45.6" width="1.2" height="1" fill="#f2e2c0" opacity="0.71"/>
<rect x="156.2" y="48.0" width="1.2" height="1" fill="#f2e2c0" opacity="0.65"/>
<rect x="158.8" y="48.0" width="1.2" height="1" fill="#f2e2c0" opacity="0.78"/>
<rect x="166.6" y="48.0" width="1.2" height="1" fill="#f2e2c0" opacity="0.67"/>
<rect x="153.6" y="52.8" width="1.2" height="1" fill="#f2e2c0" opacity="0.73"/>
<rect x="161.4" y="52.8" width="1.2" height="1" fill="#f2e2c0" opacity="0.89"/>
<rect x="166.6" y="52.8" width="1.2" height="1" fill="#f2e2c0" opacity="0.50"/>
<rect x="153.6" y="55.2" width="1.2" height="1" fill="#f2e2c0" opacity="0.58"/>
<rect x="164.0" y="55.2" width="1.2" height="1" fill="#f2e2c0" opacity="0.47"/>
<rect x="156.2" y="57.6" width="1.2" height="1" fill="#f2e2c0" opacity="0.79"/>
<rect x="161.4" y="57.6" width="1.2" height="1" fill="#f2e2c0" opacity="0.42"/>
<rect x="158.8" y="60.0" width="1.2" height="1" fill="#f2e2c0" opacity="0.88"/>
<rect x="156.2" y="62.4" width="1.2" height="1" fill="#f2e2c0" opacity="0.65"/>
<rect x="158.8" y="62.4" width="1.2" height="1" fill="#f2e2c0" opacity="0.81"/>
<rect x="166.6" y="62.4" width="1.2" height="1" fill="#f2e2c0" opacity="0.56"/>
<rect x="151.0" y="64.8" width="1.2" height="1" fill="#f2e2c0" opacity="0.58"/>
<rect x="153.6" y="64.8" width="1.2" height="1" fill="#f2e2c0" opacity="0.35"/>
<rect x="158.8" y="64.8" width="1.2" height="1" fill="#f2e2c0" opacity="0.48"/>
<rect x="161.4" y="64.8" width="1.2" height="1" fill="#f2e2c0" opacity="0.61"/>
<rect x="161.4" y="67.2" width="1.2" height="1" fill="#f2e2c0" opacity="0.81"/>
<rect x="151.0" y="69.6" width="1.2" height="1" fill="#f2e2c0" opacity="0.81"/>
<rect x="156.2" y="69.6" width="1.2" height="1" fill="#f2e2c0" opacity="0.36"/>
<rect x="164.0" y="69.6" width="1.2" height="1" fill="#f2e2c0" opacity="0.41"/>
<rect x="166.6" y="69.6" width="1.2" height="1" fill="#f2e2c0" opacity="0.48"/>
<rect x="153.6" y="72.0" width="1.2" height="1" fill="#f2e2c0" opacity="0.43"/>
<rect x="161.4" y="72.0" width="1.2" height="1" fill="#f2e2c0" opacity="0.84"/>
<rect x="161.4" y="74.4" width="1.2" height="1" fill="#f2e2c0" opacity="0.73"/>
<rect x="158.8" y="76.8" width="1.2" height="1" fill="#f2e2c0" opacity="0.48"/>
<rect x="161.4" y="76.8" width="1.2" height="1" fill="#f2e2c0" opacity="0.62"/>
<rect x="164.0" y="76.8" width="1.2" height="1" fill="#f2e2c0" opacity="0.61"/>
<rect x="166.6" y="76.8" width="1.2" height="1" fill="#f2e2c0" opacity="0.62"/>
<rect x="162" y="17" width="7" height="8" fill="#8a80a0"/>
<rect x="162" y="17" width="7" height="1.5" fill="#b0b0c8" opacity=".6"/>
<rect x="173" y="17" width="6" height="8" fill="#8a80a0"/>
<rect x="173" y="17" width="6" height="1.5" fill="#b0b0c8" opacity=".6"/>
<rect x="172" y="25" width="32" height="48" fill="#8a88aa"/>
<rect x="172" y="25" width="11.2" height="48" fill="#6a6c94"/>
<rect x="172" y="25" width="32" height="1.5" fill="#b0b0c8" opacity=".6"/>
<rect x="180.8" y="27.0" width="1.2" height="1" fill="#f2e2c0" opacity="0.81"/>
<rect x="201.6" y="27.0" width="1.2" height="1" fill="#f2e2c0" opacity="0.70"/>
<rect x="175.6" y="29.4" width="1.2" height="1" fill="#f2e2c0" opacity="0.69"/>
<rect x="183.4" y="29.4" width="1.2" height="1" fill="#f2e2c0" opacity="0.89"/>
<rect x="193.8" y="29.4" width="1.2" height="1" fill="#f2e2c0" opacity="0.75"/>
<rect x="199.0" y="29.4" width="1.2" height="1" fill="#f2e2c0" opacity="0.82"/>
<rect x="180.8" y="31.8" width="1.2" height="1" fill="#f2e2c0" opacity="0.59"/>
<rect x="191.2" y="31.8" width="1.2" height="1" fill="#f2e2c0" opacity="0.81"/>
<rect x="199.0" y="31.8" width="1.2" height="1" fill="#f2e2c0" opacity="0.63"/>
<rect x="178.2" y="34.2" width="1.2" height="1" fill="#f2e2c0" opacity="0.52"/>
<rect x="180.8" y="34.2" width="1.2" height="1" fill="#f2e2c0" opacity="0.67"/>
<rect x="188.6" y="34.2" width="1.2" height="1" fill="#f2e2c0" opacity="0.75"/>
<rect x="196.4" y="34.2" width="1.2" height="1" fill="#f2e2c0" opacity="0.52"/>
<rect x="199.0" y="34.2" width="1.2" height="1" fill="#f2e2c0" opacity="0.45"/>
<rect x="199.0" y="36.6" width="1.2" height="1" fill="#f2e2c0" opacity="0.72"/>
<rect x="175.6" y="39.0" width="1.2" height="1" fill="#f2e2c0" opacity="0.45"/>
<rect x="178.2" y="39.0" width="1.2" height="1" fill="#f2e2c0" opacity="0.78"/>
<rect x="196.4" y="39.0" width="1.2" height="1" fill="#f2e2c0" opacity="0.52"/>
<rect x="201.6" y="39.0" width="1.2" height="1" fill="#f2e2c0" opacity="0.59"/>
<rect x="178.2" y="41.4" width="1.2" height="1" fill="#f2e2c0" opacity="0.66"/>
<rect x="180.8" y="41.4" width="1.2" height="1" fill="#f2e2c0" opacity="0.42"/>
<rect x="193.8" y="41.4" width="1.2" height="1" fill="#f2e2c0" opacity="0.56"/>
<rect x="178.2" y="43.8" width="1.2" height="1" fill="#f2e2c0" opacity="0.70"/>
<rect x="180.8" y="43.8" width="1.2" height="1" fill="#f2e2c0" opacity="0.43"/>
<rect x="183.4" y="43.8" width="1.2" height="1" fill="#f2e2c0" opacity="0.35"/>
<rect x="188.6" y="43.8" width="1.2" height="1" fill="#f2e2c0" opacity="0.88"/>
<rect x="191.2" y="43.8" width="1.2" height="1" fill="#f2e2c0" opacity="0.83"/>
<rect x="193.8" y="43.8" width="1.2" height="1" fill="#f2e2c0" opacity="0.36"/>
<rect x="199.0" y="43.8" width="1.2" height="1" fill="#f2e2c0" opacity="0.75"/>
<rect x="201.6" y="43.8" width="1.2" height="1" fill="#f2e2c0" opacity="0.38"/>
<rect x="183.4" y="46.2" width="1.2" height="1" fill="#f2e2c0" opacity="0.70"/>
<rect x="193.8" y="46.2" width="1.2" height="1" fill="#f2e2c0" opacity="0.88"/>
<rect x="199.0" y="46.2" width="1.2" height="1" fill="#f2e2c0" opacity="0.36"/>
<rect x="175.6" y="48.6" width="1.2" height="1" fill="#f2e2c0" opacity="0.52"/>
<rect x="180.8" y="48.6" width="1.2" height="1" fill="#f2e2c0" opacity="0.82"/>
<rect x="186.0" y="48.6" width="1.2" height="1" fill="#f2e2c0" opacity="0.55"/>
<rect x="196.4" y="48.6" width="1.2" height="1" fill="#f2e2c0" opacity="0.79"/>
<rect x="191.2" y="51.0" width="1.2" height="1" fill="#f2e2c0" opacity="0.38"/>
<rect x="201.6" y="51.0" width="1.2" height="1" fill="#f2e2c0" opacity="0.68"/>
<rect x="180.8" y="53.4" width="1.2" height="1" fill="#f2e2c0" opacity="0.59"/>
<rect x="199.0" y="53.4" width="1.2" height="1" fill="#f2e2c0" opacity="0.35"/>
<rect x="201.6" y="53.4" width="1.2" height="1" fill="#f2e2c0" opacity="0.58"/>
<rect x="180.8" y="55.8" width="1.2" height="1" fill="#f2e2c0" opacity="0.81"/>
<rect x="191.2" y="55.8" width="1.2" height="1" fill="#f2e2c0" opacity="0.82"/>
<rect x="201.6" y="55.8" width="1.2" height="1" fill="#f2e2c0" opacity="0.40"/>
<rect x="178.2" y="58.2" width="1.2" height="1" fill="#f2e2c0" opacity="0.76"/>
<rect x="183.4" y="58.2" width="1.2" height="1" fill="#f2e2c0" opacity="0.68"/>
<rect x="191.2" y="58.2" width="1.2" height="1" fill="#f2e2c0" opacity="0.49"/>
<rect x="201.6" y="58.2" width="1.2" height="1" fill="#f2e2c0" opacity="0.79"/>
<rect x="175.6" y="60.6" width="1.2" height="1" fill="#f2e2c0" opacity="0.67"/>
<rect x="191.2" y="60.6" width="1.2" height="1" fill="#f2e2c0" opacity="0.46"/>
<rect x="193.8" y="60.6" width="1.2" height="1" fill="#f2e2c0" opacity="0.74"/>
<rect x="175.6" y="63.0" width="1.2" height="1" fill="#f2e2c0" opacity="0.37"/>
<rect x="183.4" y="63.0" width="1.2" height="1" fill="#f2e2c0" opacity="0.70"/>
<rect x="188.6" y="63.0" width="1.2" height="1" fill="#f2e2c0" opacity="0.68"/>
<rect x="191.2" y="63.0" width="1.2" height="1" fill="#f2e2c0" opacity="0.64"/>
<rect x="193.8" y="63.0" width="1.2" height="1" fill="#f2e2c0" opacity="0.37"/>
<rect x="175.6" y="65.4" width="1.2" height="1" fill="#f2e2c0" opacity="0.78"/>
<rect x="191.2" y="65.4" width="1.2" height="1" fill="#f2e2c0" opacity="0.37"/>
<rect x="193.8" y="65.4" width="1.2" height="1" fill="#f2e2c0" opacity="0.45"/>
<rect x="196.4" y="65.4" width="1.2" height="1" fill="#f2e2c0" opacity="0.38"/>
<rect x="180.8" y="67.8" width="1.2" height="1" fill="#f2e2c0" opacity="0.68"/>
<rect x="186.0" y="67.8" width="1.2" height="1" fill="#f2e2c0" opacity="0.88"/>
<rect x="188.6" y="67.8" width="1.2" height="1" fill="#f2e2c0" opacity="0.66"/>
<rect x="173.0" y="70.2" width="1.2" height="1" fill="#f2e2c0" opacity="0.88"/>
<rect x="178.2" y="70.2" width="1.2" height="1" fill="#f2e2c0" opacity="0.37"/>
<rect x="180.8" y="70.2" width="1.2" height="1" fill="#f2e2c0" opacity="0.54"/>
<rect x="191.2" y="70.2" width="1.2" height="1" fill="#f2e2c0" opacity="0.78"/>
<rect x="201.6" y="70.2" width="1.2" height="1" fill="#f2e2c0" opacity="0.43"/>
<rect x="201" y="23" width="15" height="35" fill="#8684a6"/>
<rect x="201" y="23" width="5.2" height="35" fill="#66688e"/>
<rect x="201" y="23" width="15" height="1.5" fill="#b0b0c8" opacity=".6"/>
<rect x="209.8" y="25.0" width="1.2" height="1" fill="#f2e2c0" opacity="0.68"/>
<rect x="215.0" y="25.0" width="1.2" height="1" fill="#f2e2c0" opacity="0.53"/>
<rect x="202.0" y="27.4" width="1.2" height="1" fill="#f2e2c0" opacity="0.42"/>
<rect x="207.2" y="27.4" width="1.2" height="1" fill="#f2e2c0" opacity="0.48"/>
<rect x="209.8" y="27.4" width="1.2" height="1" fill="#f2e2c0" opacity="0.72"/>
<rect x="212.4" y="27.4" width="1.2" height="1" fill="#f2e2c0" opacity="0.74"/>
<rect x="215.0" y="27.4" width="1.2" height="1" fill="#f2e2c0" opacity="0.37"/>
<rect x="204.6" y="29.8" width="1.2" height="1" fill="#f2e2c0" opacity="0.86"/>
<rect x="212.4" y="29.8" width="1.2" height="1" fill="#f2e2c0" opacity="0.60"/>
<rect x="215.0" y="29.8" width="1.2" height="1" fill="#f2e2c0" opacity="0.86"/>
<rect x="209.8" y="32.2" width="1.2" height="1" fill="#f2e2c0" opacity="0.80"/>
<rect x="202.0" y="34.6" width="1.2" height="1" fill="#f2e2c0" opacity="0.47"/>
<rect x="204.6" y="34.6" width="1.2" height="1" fill="#f2e2c0" opacity="0.74"/>
<rect x="209.8" y="34.6" width="1.2" height="1" fill="#f2e2c0" opacity="0.83"/>
<rect x="212.4" y="34.6" width="1.2" height="1" fill="#f2e2c0" opacity="0.58"/>
<rect x="215.0" y="34.6" width="1.2" height="1" fill="#f2e2c0" opacity="0.50"/>
<rect x="204.6" y="37.0" width="1.2" height="1" fill="#f2e2c0" opacity="0.44"/>
<rect x="209.8" y="37.0" width="1.2" height="1" fill="#f2e2c0" opacity="0.85"/>
<rect x="212.4" y="37.0" width="1.2" height="1" fill="#f2e2c0" opacity="0.89"/>
<rect x="215.0" y="37.0" width="1.2" height="1" fill="#f2e2c0" opacity="0.84"/>
<rect x="204.6" y="39.4" width="1.2" height="1" fill="#f2e2c0" opacity="0.61"/>
<rect x="207.2" y="39.4" width="1.2" height="1" fill="#f2e2c0" opacity="0.49"/>
<rect x="209.8" y="39.4" width="1.2" height="1" fill="#f2e2c0" opacity="0.55"/>
<rect x="204.6" y="41.8" width="1.2" height="1" fill="#f2e2c0" opacity="0.51"/>
<rect x="209.8" y="41.8" width="1.2" height="1" fill="#f2e2c0" opacity="0.75"/>
<rect x="212.4" y="41.8" width="1.2" height="1" fill="#f2e2c0" opacity="0.89"/>
<rect x="215.0" y="41.8" width="1.2" height="1" fill="#f2e2c0" opacity="0.79"/>
<rect x="202.0" y="44.2" width="1.2" height="1" fill="#f2e2c0" opacity="0.43"/>
<rect x="204.6" y="44.2" width="1.2" height="1" fill="#f2e2c0" opacity="0.81"/>
<rect x="209.8" y="44.2" width="1.2" height="1" fill="#f2e2c0" opacity="0.59"/>
<rect x="215.0" y="44.2" width="1.2" height="1" fill="#f2e2c0" opacity="0.66"/>
<rect x="202.0" y="46.6" width="1.2" height="1" fill="#f2e2c0" opacity="0.45"/>
<rect x="209.8" y="46.6" width="1.2" height="1" fill="#f2e2c0" opacity="0.39"/>
<rect x="212.4" y="46.6" width="1.2" height="1" fill="#f2e2c0" opacity="0.68"/>
<rect x="202.0" y="49.0" width="1.2" height="1" fill="#f2e2c0" opacity="0.46"/>
<rect x="215.0" y="49.0" width="1.2" height="1" fill="#f2e2c0" opacity="0.39"/>
<rect x="209.8" y="51.4" width="1.2" height="1" fill="#f2e2c0" opacity="0.80"/>
<rect x="212.4" y="51.4" width="1.2" height="1" fill="#f2e2c0" opacity="0.81"/>
<rect x="204.6" y="53.8" width="1.2" height="1" fill="#f2e2c0" opacity="0.85"/>
<rect x="212.4" y="53.8" width="1.2" height="1" fill="#f2e2c0" opacity="0.45"/>
<rect x="204.6" y="56.2" width="1.2" height="1" fill="#f2e2c0" opacity="0.55"/>
<rect x="209.8" y="56.2" width="1.2" height="1" fill="#f2e2c0" opacity="0.64"/>
<rect x="217" y="23" width="19" height="35" fill="#8c88aa"/>
<rect x="217" y="23" width="6.6" height="35" fill="#6c6a90"/>
<rect x="217" y="23" width="19" height="1.5" fill="#b0b0c8" opacity=".6"/>
<rect x="218.0" y="25.0" width="1.2" height="1" fill="#f2e2c0" opacity="0.74"/>
<rect x="225.8" y="25.0" width="1.2" height="1" fill="#f2e2c0" opacity="0.74"/>
<rect x="233.6" y="25.0" width="1.2" height="1" fill="#f2e2c0" opacity="0.83"/>
<rect x="231.0" y="27.4" width="1.2" height="1" fill="#f2e2c0" opacity="0.88"/>
<rect x="233.6" y="27.4" width="1.2" height="1" fill="#f2e2c0" opacity="0.45"/>
<rect x="218.0" y="29.8" width="1.2" height="1" fill="#f2e2c0" opacity="0.49"/>
<rect x="223.2" y="29.8" width="1.2" height="1" fill="#f2e2c0" opacity="0.40"/>
<rect x="228.4" y="29.8" width="1.2" height="1" fill="#f2e2c0" opacity="0.36"/>
<rect x="223.2" y="32.2" width="1.2" height="1" fill="#f2e2c0" opacity="0.83"/>
<rect x="228.4" y="32.2" width="1.2" height="1" fill="#f2e2c0" opacity="0.42"/>
<rect x="218.0" y="34.6" width="1.2" height="1" fill="#f2e2c0" opacity="0.42"/>
<rect x="223.2" y="34.6" width="1.2" height="1" fill="#f2e2c0" opacity="0.68"/>
<rect x="228.4" y="34.6" width="1.2" height="1" fill="#f2e2c0" opacity="0.67"/>
<rect x="233.6" y="34.6" width="1.2" height="1" fill="#f2e2c0" opacity="0.80"/>
<rect x="220.6" y="39.4" width="1.2" height="1" fill="#f2e2c0" opacity="0.48"/>
<rect x="223.2" y="39.4" width="1.2" height="1" fill="#f2e2c0" opacity="0.59"/>
<rect x="220.6" y="41.8" width="1.2" height="1" fill="#f2e2c0" opacity="0.63"/>
<rect x="228.4" y="41.8" width="1.2" height="1" fill="#f2e2c0" opacity="0.58"/>
<rect x="220.6" y="44.2" width="1.2" height="1" fill="#f2e2c0" opacity="0.59"/>
<rect x="225.8" y="44.2" width="1.2" height="1" fill="#f2e2c0" opacity="0.43"/>
<rect x="228.4" y="46.6" width="1.2" height="1" fill="#f2e2c0" opacity="0.70"/>
<rect x="231.0" y="46.6" width="1.2" height="1" fill="#f2e2c0" opacity="0.72"/>
<rect x="233.6" y="46.6" width="1.2" height="1" fill="#f2e2c0" opacity="0.65"/>
<rect x="223.2" y="49.0" width="1.2" height="1" fill="#f2e2c0" opacity="0.64"/>
<rect x="231.0" y="49.0" width="1.2" height="1" fill="#f2e2c0" opacity="0.52"/>
<rect x="218.0" y="51.4" width="1.2" height="1" fill="#f2e2c0" opacity="0.68"/>
<rect x="225.8" y="51.4" width="1.2" height="1" fill="#f2e2c0" opacity="0.61"/>
<rect x="231.0" y="51.4" width="1.2" height="1" fill="#f2e2c0" opacity="0.42"/>
<rect x="233.6" y="51.4" width="1.2" height="1" fill="#f2e2c0" opacity="0.51"/>
<rect x="220.6" y="53.8" width="1.2" height="1" fill="#f2e2c0" opacity="0.48"/>
<rect x="223.2" y="53.8" width="1.2" height="1" fill="#f2e2c0" opacity="0.65"/>
<rect x="218.0" y="56.2" width="1.2" height="1" fill="#f2e2c0" opacity="0.74"/>
<rect x="231.0" y="56.2" width="1.2" height="1" fill="#f2e2c0" opacity="0.48"/>
<rect x="233.6" y="56.2" width="1.2" height="1" fill="#f2e2c0" opacity="0.63"/>
<rect x="239" y="25" width="18" height="60" fill="#908cac"/>
<rect x="239" y="25" width="6.3" height="60" fill="#6e6c92"/>
<rect x="239" y="25" width="18" height="1.5" fill="#b0b0c8" opacity=".6"/>
<rect x="245.2" y="27.0" width="1.2" height="1" fill="#f2e2c0" opacity="0.54"/>
<rect x="250.4" y="27.0" width="1.2" height="1" fill="#f2e2c0" opacity="0.66"/>
<rect x="255.6" y="27.0" width="1.2" height="1" fill="#f2e2c0" opacity="0.89"/>
<rect x="240.0" y="29.4" width="1.2" height="1" fill="#f2e2c0" opacity="0.77"/>
<rect x="242.6" y="29.4" width="1.2" height="1" fill="#f2e2c0" opacity="0.39"/>
<rect x="250.4" y="29.4" width="1.2" height="1" fill="#f2e2c0" opacity="0.56"/>
<rect x="240.0" y="31.8" width="1.2" height="1" fill="#f2e2c0" opacity="0.47"/>
<rect x="247.8" y="31.8" width="1.2" height="1" fill="#f2e2c0" opacity="0.54"/>
<rect x="247.8" y="36.6" width="1.2" height="1" fill="#f2e2c0" opacity="0.83"/>
<rect x="250.4" y="36.6" width="1.2" height="1" fill="#f2e2c0" opacity="0.77"/>
<rect x="247.8" y="41.4" width="1.2" height="1" fill="#f2e2c0" opacity="0.56"/>
<rect x="255.6" y="41.4" width="1.2" height="1" fill="#f2e2c0" opacity="0.78"/>
<rect x="247.8" y="43.8" width="1.2" height="1" fill="#f2e2c0" opacity="0.52"/>
<rect x="250.4" y="43.8" width="1.2" height="1" fill="#f2e2c0" opacity="0.67"/>
<rect x="255.6" y="43.8" width="1.2" height="1" fill="#f2e2c0" opacity="0.86"/>
<rect x="240.0" y="46.2" width="1.2" height="1" fill="#f2e2c0" opacity="0.81"/>
<rect x="247.8" y="46.2" width="1.2" height="1" fill="#f2e2c0" opacity="0.58"/>
<rect x="253.0" y="46.2" width="1.2" height="1" fill="#f2e2c0" opacity="0.38"/>
<rect x="242.6" y="53.4" width="1.2" height="1" fill="#f2e2c0" opacity="0.56"/>
<rect x="250.4" y="55.8" width="1.2" height="1" fill="#f2e2c0" opacity="0.64"/>
<rect x="255.6" y="55.8" width="1.2" height="1" fill="#f2e2c0" opacity="0.52"/>
<rect x="247.8" y="58.2" width="1.2" height="1" fill="#f2e2c0" opacity="0.84"/>
<rect x="245.2" y="60.6" width="1.2" height="1" fill="#f2e2c0" opacity="0.51"/>
<rect x="253.0" y="60.6" width="1.2" height="1" fill="#f2e2c0" opacity="0.45"/>
<rect x="250.4" y="63.0" width="1.2" height="1" fill="#f2e2c0" opacity="0.58"/>
<rect x="255.6" y="63.0" width="1.2" height="1" fill="#f2e2c0" opacity="0.73"/>
<rect x="240.0" y="65.4" width="1.2" height="1" fill="#f2e2c0" opacity="0.52"/>
<rect x="250.4" y="65.4" width="1.2" height="1" fill="#f2e2c0" opacity="0.62"/>
<rect x="255.6" y="65.4" width="1.2" height="1" fill="#f2e2c0" opacity="0.71"/>
<rect x="250.4" y="67.8" width="1.2" height="1" fill="#f2e2c0" opacity="0.44"/>
<rect x="255.6" y="67.8" width="1.2" height="1" fill="#f2e2c0" opacity="0.41"/>
<rect x="240.0" y="70.2" width="1.2" height="1" fill="#f2e2c0" opacity="0.64"/>
<rect x="250.4" y="70.2" width="1.2" height="1" fill="#f2e2c0" opacity="0.36"/>
<rect x="255.6" y="70.2" width="1.2" height="1" fill="#f2e2c0" opacity="0.74"/>
<rect x="242.6" y="72.6" width="1.2" height="1" fill="#f2e2c0" opacity="0.50"/>
<rect x="245.2" y="72.6" width="1.2" height="1" fill="#f2e2c0" opacity="0.85"/>
<rect x="250.4" y="72.6" width="1.2" height="1" fill="#f2e2c0" opacity="0.60"/>
<rect x="255.6" y="72.6" width="1.2" height="1" fill="#f2e2c0" opacity="0.84"/>
<rect x="250.4" y="75.0" width="1.2" height="1" fill="#f2e2c0" opacity="0.37"/>
<rect x="240.0" y="77.4" width="1.2" height="1" fill="#f2e2c0" opacity="0.84"/>
<rect x="245.2" y="77.4" width="1.2" height="1" fill="#f2e2c0" opacity="0.68"/>
<rect x="255.6" y="77.4" width="1.2" height="1" fill="#f2e2c0" opacity="0.56"/>
<rect x="242.6" y="79.8" width="1.2" height="1" fill="#f2e2c0" opacity="0.52"/>
<rect x="253.0" y="79.8" width="1.2" height="1" fill="#f2e2c0" opacity="0.45"/>
<rect x="240.0" y="82.2" width="1.2" height="1" fill="#f2e2c0" opacity="0.88"/>
<rect x="242.6" y="82.2" width="1.2" height="1" fill="#f2e2c0" opacity="0.66"/>
<rect x="245.2" y="82.2" width="1.2" height="1" fill="#f2e2c0" opacity="0.64"/>
<rect x="253.0" y="82.2" width="1.2" height="1" fill="#f2e2c0" opacity="0.42"/>
<rect x="257" y="25" width="29" height="58" fill="#8e88a8"/>
<rect x="257" y="25" width="10.1" height="58" fill="#6e6a90"/>
<rect x="257" y="25" width="29" height="1.5" fill="#b0b0c8" opacity=".6"/>
<rect x="260.6" y="27.0" width="1.2" height="1" fill="#f2e2c0" opacity="0.46"/>
<rect x="263.2" y="27.0" width="1.2" height="1" fill="#f2e2c0" opacity="0.48"/>
<rect x="265.8" y="27.0" width="1.2" height="1" fill="#f2e2c0" opacity="0.72"/>
<rect x="268.4" y="27.0" width="1.2" height="1" fill="#f2e2c0" opacity="0.44"/>
<rect x="273.6" y="27.0" width="1.2" height="1" fill="#f2e2c0" opacity="0.50"/>
<rect x="278.8" y="27.0" width="1.2" height="1" fill="#f2e2c0" opacity="0.59"/>
<rect x="258.0" y="29.4" width="1.2" height="1" fill="#f2e2c0" opacity="0.54"/>
<rect x="268.4" y="29.4" width="1.2" height="1" fill="#f2e2c0" opacity="0.87"/>
<rect x="273.6" y="29.4" width="1.2" height="1" fill="#f2e2c0" opacity="0.60"/>
<rect x="276.2" y="29.4" width="1.2" height="1" fill="#f2e2c0" opacity="0.74"/>
<rect x="278.8" y="29.4" width="1.2" height="1" fill="#f2e2c0" opacity="0.84"/>
<rect x="258.0" y="31.8" width="1.2" height="1" fill="#f2e2c0" opacity="0.68"/>
<rect x="260.6" y="31.8" width="1.2" height="1" fill="#f2e2c0" opacity="0.83"/>
<rect x="263.2" y="31.8" width="1.2" height="1" fill="#f2e2c0" opacity="0.63"/>
<rect x="268.4" y="31.8" width="1.2" height="1" fill="#f2e2c0" opacity="0.77"/>
<rect x="278.8" y="31.8" width="1.2" height="1" fill="#f2e2c0" opacity="0.56"/>
<rect x="281.4" y="31.8" width="1.2" height="1" fill="#f2e2c0" opacity="0.45"/>
<rect x="258.0" y="34.2" width="1.2" height="1" fill="#f2e2c0" opacity="0.71"/>
<rect x="260.6" y="34.2" width="1.2" height="1" fill="#f2e2c0" opacity="0.66"/>
<rect x="268.4" y="34.2" width="1.2" height="1" fill="#f2e2c0" opacity="0.39"/>
<rect x="271.0" y="34.2" width="1.2" height="1" fill="#f2e2c0" opacity="0.47"/>
<rect x="273.6" y="34.2" width="1.2" height="1" fill="#f2e2c0" opacity="0.74"/>
<rect x="276.2" y="34.2" width="1.2" height="1" fill="#f2e2c0" opacity="0.57"/>
<rect x="260.6" y="36.6" width="1.2" height="1" fill="#f2e2c0" opacity="0.50"/>
<rect x="263.2" y="36.6" width="1.2" height="1" fill="#f2e2c0" opacity="0.72"/>
<rect x="278.8" y="36.6" width="1.2" height="1" fill="#f2e2c0" opacity="0.82"/>
<rect x="258.0" y="39.0" width="1.2" height="1" fill="#f2e2c0" opacity="0.41"/>
<rect x="268.4" y="39.0" width="1.2" height="1" fill="#f2e2c0" opacity="0.37"/>
<rect x="271.0" y="39.0" width="1.2" height="1" fill="#f2e2c0" opacity="0.46"/>
<rect x="273.6" y="39.0" width="1.2" height="1" fill="#f2e2c0" opacity="0.56"/>
<rect x="276.2" y="39.0" width="1.2" height="1" fill="#f2e2c0" opacity="0.52"/>
<rect x="281.4" y="39.0" width="1.2" height="1" fill="#f2e2c0" opacity="0.81"/>
<rect x="260.6" y="41.4" width="1.2" height="1" fill="#f2e2c0" opacity="0.59"/>
<rect x="265.8" y="41.4" width="1.2" height="1" fill="#f2e2c0" opacity="0.35"/>
<rect x="273.6" y="41.4" width="1.2" height="1" fill="#f2e2c0" opacity="0.37"/>
<rect x="281.4" y="41.4" width="1.2" height="1" fill="#f2e2c0" opacity="0.48"/>
<rect x="284.0" y="41.4" width="1.2" height="1" fill="#f2e2c0" opacity="0.79"/>
<rect x="258.0" y="43.8" width="1.2" height="1" fill="#f2e2c0" opacity="0.85"/>
<rect x="263.2" y="43.8" width="1.2" height="1" fill="#f2e2c0" opacity="0.73"/>
<rect x="273.6" y="43.8" width="1.2" height="1" fill="#f2e2c0" opacity="0.40"/>
<rect x="268.4" y="46.2" width="1.2" height="1" fill="#f2e2c0" opacity="0.73"/>
<rect x="278.8" y="46.2" width="1.2" height="1" fill="#f2e2c0" opacity="0.77"/>
<rect x="281.4" y="46.2" width="1.2" height="1" fill="#f2e2c0" opacity="0.74"/>
<rect x="258.0" y="48.6" width="1.2" height="1" fill="#f2e2c0" opacity="0.65"/>
<rect x="268.4" y="48.6" width="1.2" height="1" fill="#f2e2c0" opacity="0.38"/>
<rect x="276.2" y="48.6" width="1.2" height="1" fill="#f2e2c0" opacity="0.52"/>
<rect x="278.8" y="48.6" width="1.2" height="1" fill="#f2e2c0" opacity="0.74"/>
<rect x="284.0" y="48.6" width="1.2" height="1" fill="#f2e2c0" opacity="0.48"/>
<rect x="268.4" y="51.0" width="1.2" height="1" fill="#f2e2c0" opacity="0.84"/>
<rect x="271.0" y="51.0" width="1.2" height="1" fill="#f2e2c0" opacity="0.66"/>
<rect x="273.6" y="51.0" width="1.2" height="1" fill="#f2e2c0" opacity="0.80"/>
<rect x="281.4" y="51.0" width="1.2" height="1" fill="#f2e2c0" opacity="0.72"/>
<rect x="265.8" y="53.4" width="1.2" height="1" fill="#f2e2c0" opacity="0.51"/>
<rect x="271.0" y="53.4" width="1.2" height="1" fill="#f2e2c0" opacity="0.38"/>
<rect x="273.6" y="53.4" width="1.2" height="1" fill="#f2e2c0" opacity="0.46"/>
<rect x="281.4" y="53.4" width="1.2" height="1" fill="#f2e2c0" opacity="0.53"/>
<rect x="260.6" y="55.8" width="1.2" height="1" fill="#f2e2c0" opacity="0.39"/>
<rect x="263.2" y="55.8" width="1.2" height="1" fill="#f2e2c0" opacity="0.90"/>
<rect x="268.4" y="55.8" width="1.2" height="1" fill="#f2e2c0" opacity="0.74"/>
<rect x="276.2" y="55.8" width="1.2" height="1" fill="#f2e2c0" opacity="0.62"/>
<rect x="281.4" y="55.8" width="1.2" height="1" fill="#f2e2c0" opacity="0.65"/>
<rect x="284.0" y="55.8" width="1.2" height="1" fill="#f2e2c0" opacity="0.86"/>
<rect x="268.4" y="58.2" width="1.2" height="1" fill="#f2e2c0" opacity="0.49"/>
<rect x="271.0" y="58.2" width="1.2" height="1" fill="#f2e2c0" opacity="0.37"/>
<rect x="278.8" y="58.2" width="1.2" height="1" fill="#f2e2c0" opacity="0.45"/>
<rect x="260.6" y="60.6" width="1.2" height="1" fill="#f2e2c0" opacity="0.78"/>
<rect x="268.4" y="60.6" width="1.2" height="1" fill="#f2e2c0" opacity="0.45"/>
<rect x="273.6" y="60.6" width="1.2" height="1" fill="#f2e2c0" opacity="0.55"/>
<rect x="284.0" y="60.6" width="1.2" height="1" fill="#f2e2c0" opacity="0.37"/>
<rect x="278.8" y="63.0" width="1.2" height="1" fill="#f2e2c0" opacity="0.51"/>
<rect x="284.0" y="63.0" width="1.2" height="1" fill="#f2e2c0" opacity="0.73"/>
<rect x="258.0" y="65.4" width="1.2" height="1" fill="#f2e2c0" opacity="0.59"/>
<rect x="263.2" y="65.4" width="1.2" height="1" fill="#f2e2c0" opacity="0.37"/>
<rect x="268.4" y="65.4" width="1.2" height="1" fill="#f2e2c0" opacity="0.75"/>
<rect x="271.0" y="65.4" width="1.2" height="1" fill="#f2e2c0" opacity="0.81"/>
<rect x="281.4" y="65.4" width="1.2" height="1" fill="#f2e2c0" opacity="0.71"/>
<rect x="260.6" y="67.8" width="1.2" height="1" fill="#f2e2c0" opacity="0.59"/>
<rect x="271.0" y="67.8" width="1.2" height="1" fill="#f2e2c0" opacity="0.51"/>
<rect x="278.8" y="67.8" width="1.2" height="1" fill="#f2e2c0" opacity="0.46"/>
<rect x="281.4" y="67.8" width="1.2" height="1" fill="#f2e2c0" opacity="0.53"/>
<rect x="276.2" y="70.2" width="1.2" height="1" fill="#f2e2c0" opacity="0.72"/>
<rect x="281.4" y="70.2" width="1.2" height="1" fill="#f2e2c0" opacity="0.66"/>
<rect x="263.2" y="72.6" width="1.2" height="1" fill="#f2e2c0" opacity="0.54"/>
<rect x="268.4" y="72.6" width="1.2" height="1" fill="#f2e2c0" opacity="0.45"/>
<rect x="276.2" y="72.6" width="1.2" height="1" fill="#f2e2c0" opacity="0.71"/>
<rect x="265.8" y="75.0" width="1.2" height="1" fill="#f2e2c0" opacity="0.45"/>
<rect x="273.6" y="75.0" width="1.2" height="1" fill="#f2e2c0" opacity="0.82"/>
<rect x="276.2" y="75.0" width="1.2" height="1" fill="#f2e2c0" opacity="0.40"/>
<rect x="281.4" y="75.0" width="1.2" height="1" fill="#f2e2c0" opacity="0.62"/>
<rect x="258.0" y="77.4" width="1.2" height="1" fill="#f2e2c0" opacity="0.66"/>
<rect x="260.6" y="77.4" width="1.2" height="1" fill="#f2e2c0" opacity="0.63"/>
<rect x="265.8" y="77.4" width="1.2" height="1" fill="#f2e2c0" opacity="0.57"/>
<rect x="268.4" y="77.4" width="1.2" height="1" fill="#f2e2c0" opacity="0.59"/>
<rect x="281.4" y="77.4" width="1.2" height="1" fill="#f2e2c0" opacity="0.89"/>
<rect x="258.0" y="79.8" width="1.2" height="1" fill="#f2e2c0" opacity="0.81"/>
<rect x="263.2" y="79.8" width="1.2" height="1" fill="#f2e2c0" opacity="0.88"/>
<rect x="271.0" y="79.8" width="1.2" height="1" fill="#f2e2c0" opacity="0.78"/>
<rect x="273.6" y="79.8" width="1.2" height="1" fill="#f2e2c0" opacity="0.48"/>
<rect x="278.8" y="79.8" width="1.2" height="1" fill="#f2e2c0" opacity="0.68"/>
<rect x="281.4" y="79.8" width="1.2" height="1" fill="#f2e2c0" opacity="0.51"/>
<rect x="289" y="26" width="26" height="32" fill="#92809a"/>
<rect x="289" y="26" width="9.1" height="32" fill="#72687e"/>
<rect x="289" y="26" width="26" height="1.5" fill="#b0b0c8" opacity=".6"/>
<rect x="308.2" y="28.0" width="1.2" height="1" fill="#f0c0a0" opacity="0.76"/>
<rect x="310.8" y="28.0" width="1.2" height="1" fill="#f0c0a0" opacity="0.77"/>
<rect x="292.6" y="30.4" width="1.2" height="1" fill="#f0c0a0" opacity="0.56"/>
<rect x="303.0" y="30.4" width="1.2" height="1" fill="#f0c0a0" opacity="0.68"/>
<rect x="305.6" y="30.4" width="1.2" height="1" fill="#f0c0a0" opacity="0.65"/>
<rect x="310.8" y="30.4" width="1.2" height="1" fill="#f0c0a0" opacity="0.86"/>
<rect x="290.0" y="32.8" width="1.2" height="1" fill="#f0c0a0" opacity="0.46"/>
<rect x="300.4" y="32.8" width="1.2" height="1" fill="#f0c0a0" opacity="0.36"/>
<rect x="303.0" y="32.8" width="1.2" height="1" fill="#f0c0a0" opacity="0.79"/>
<rect x="305.6" y="32.8" width="1.2" height="1" fill="#f0c0a0" opacity="0.65"/>
<rect x="308.2" y="32.8" width="1.2" height="1" fill="#f0c0a0" opacity="0.73"/>
<rect x="313.4" y="32.8" width="1.2" height="1" fill="#f0c0a0" opacity="0.83"/>
<rect x="300.4" y="35.2" width="1.2" height="1" fill="#f0c0a0" opacity="0.54"/>
<rect x="303.0" y="35.2" width="1.2" height="1" fill="#f0c0a0" opacity="0.63"/>
<rect x="310.8" y="35.2" width="1.2" height="1" fill="#f0c0a0" opacity="0.45"/>
<rect x="297.8" y="37.6" width="1.2" height="1" fill="#f0c0a0" opacity="0.81"/>
<rect x="308.2" y="37.6" width="1.2" height="1" fill="#f0c0a0" opacity="0.53"/>
<rect x="310.8" y="37.6" width="1.2" height="1" fill="#f0c0a0" opacity="0.84"/>
<rect x="290.0" y="40.0" width="1.2" height="1" fill="#f0c0a0" opacity="0.44"/>
<rect x="305.6" y="40.0" width="1.2" height="1" fill="#f0c0a0" opacity="0.67"/>
<rect x="308.2" y="40.0" width="1.2" height="1" fill="#f0c0a0" opacity="0.36"/>
<rect x="290.0" y="42.4" width="1.2" height="1" fill="#f0c0a0" opacity="0.43"/>
<rect x="295.2" y="42.4" width="1.2" height="1" fill="#f0c0a0" opacity="0.50"/>
<rect x="300.4" y="42.4" width="1.2" height="1" fill="#f0c0a0" opacity="0.66"/>
<rect x="310.8" y="42.4" width="1.2" height="1" fill="#f0c0a0" opacity="0.66"/>
<rect x="303.0" y="44.8" width="1.2" height="1" fill="#f0c0a0" opacity="0.79"/>
<rect x="313.4" y="44.8" width="1.2" height="1" fill="#f0c0a0" opacity="0.77"/>
<rect x="305.6" y="47.2" width="1.2" height="1" fill="#f0c0a0" opacity="0.54"/>
<rect x="308.2" y="47.2" width="1.2" height="1" fill="#f0c0a0" opacity="0.89"/>
<rect x="290.0" y="49.6" width="1.2" height="1" fill="#f0c0a0" opacity="0.48"/>
<rect x="292.6" y="49.6" width="1.2" height="1" fill="#f0c0a0" opacity="0.42"/>
<rect x="295.2" y="49.6" width="1.2" height="1" fill="#f0c0a0" opacity="0.83"/>
<rect x="305.6" y="49.6" width="1.2" height="1" fill="#f0c0a0" opacity="0.44"/>
<rect x="308.2" y="49.6" width="1.2" height="1" fill="#f0c0a0" opacity="0.52"/>
<rect x="310.8" y="49.6" width="1.2" height="1" fill="#f0c0a0" opacity="0.75"/>
<rect x="292.6" y="52.0" width="1.2" height="1" fill="#f0c0a0" opacity="0.86"/>
<rect x="297.8" y="52.0" width="1.2" height="1" fill="#f0c0a0" opacity="0.45"/>
<rect x="290.0" y="54.4" width="1.2" height="1" fill="#f0c0a0" opacity="0.62"/>
<rect x="295.2" y="54.4" width="1.2" height="1" fill="#f0c0a0" opacity="0.49"/>
<rect x="297.8" y="54.4" width="1.2" height="1" fill="#f0c0a0" opacity="0.44"/>
<rect x="300.4" y="54.4" width="1.2" height="1" fill="#f0c0a0" opacity="0.74"/>
<rect x="303.0" y="54.4" width="1.2" height="1" fill="#f0c0a0" opacity="0.57"/>
<rect x="305.6" y="54.4" width="1.2" height="1" fill="#f0c0a0" opacity="0.68"/>
<rect x="313.4" y="54.4" width="1.2" height="1" fill="#f0c0a0" opacity="0.75"/>
<rect x="295.2" y="56.8" width="1.2" height="1" fill="#f0c0a0" opacity="0.80"/>
<rect x="300.4" y="56.8" width="1.2" height="1" fill="#f0c0a0" opacity="0.43"/>
<rect x="303.0" y="56.8" width="1.2" height="1" fill="#f0c0a0" opacity="0.65"/>
<rect x="313.4" y="56.8" width="1.2" height="1" fill="#f0c0a0" opacity="0.53"/>
<rect x="28" y="54" width="29" height="35" fill="#8a829e"/>
<rect x="28" y="54" width="10.1" height="35" fill="#6c6888"/>
<rect x="28" y="54" width="29" height="1.5" fill="#b0b0c8" opacity=".6"/>
<rect x="39.4" y="56.0" width="1.2" height="1" fill="#f2e2c0" opacity="0.38"/>
<rect x="44.6" y="56.0" width="1.2" height="1" fill="#f2e2c0" opacity="0.69"/>
<rect x="47.2" y="56.0" width="1.2" height="1" fill="#f2e2c0" opacity="0.62"/>
<rect x="52.4" y="56.0" width="1.2" height="1" fill="#f2e2c0" opacity="0.60"/>
<rect x="55.0" y="56.0" width="1.2" height="1" fill="#f2e2c0" opacity="0.86"/>
<rect x="34.2" y="58.4" width="1.2" height="1" fill="#f2e2c0" opacity="0.69"/>
<rect x="39.4" y="58.4" width="1.2" height="1" fill="#f2e2c0" opacity="0.40"/>
<rect x="42.0" y="58.4" width="1.2" height="1" fill="#f2e2c0" opacity="0.43"/>
<rect x="47.2" y="58.4" width="1.2" height="1" fill="#f2e2c0" opacity="0.80"/>
<rect x="36.8" y="60.8" width="1.2" height="1" fill="#f2e2c0" opacity="0.76"/>
<rect x="39.4" y="60.8" width="1.2" height="1" fill="#f2e2c0" opacity="0.74"/>
<rect x="47.2" y="60.8" width="1.2" height="1" fill="#f2e2c0" opacity="0.77"/>
<rect x="55.0" y="60.8" width="1.2" height="1" fill="#f2e2c0" opacity="0.64"/>
<rect x="31.6" y="63.2" width="1.2" height="1" fill="#f2e2c0" opacity="0.35"/>
<rect x="47.2" y="63.2" width="1.2" height="1" fill="#f2e2c0" opacity="0.77"/>
<rect x="49.8" y="63.2" width="1.2" height="1" fill="#f2e2c0" opacity="0.37"/>
<rect x="52.4" y="63.2" width="1.2" height="1" fill="#f2e2c0" opacity="0.38"/>
<rect x="31.6" y="65.6" width="1.2" height="1" fill="#f2e2c0" opacity="0.87"/>
<rect x="36.8" y="65.6" width="1.2" height="1" fill="#f2e2c0" opacity="0.45"/>
<rect x="44.6" y="65.6" width="1.2" height="1" fill="#f2e2c0" opacity="0.37"/>
<rect x="49.8" y="65.6" width="1.2" height="1" fill="#f2e2c0" opacity="0.89"/>
<rect x="29.0" y="68.0" width="1.2" height="1" fill="#f2e2c0" opacity="0.79"/>
<rect x="34.2" y="68.0" width="1.2" height="1" fill="#f2e2c0" opacity="0.85"/>
<rect x="36.8" y="68.0" width="1.2" height="1" fill="#f2e2c0" opacity="0.75"/>
<rect x="39.4" y="68.0" width="1.2" height="1" fill="#f2e2c0" opacity="0.71"/>
<rect x="47.2" y="68.0" width="1.2" height="1" fill="#f2e2c0" opacity="0.66"/>
<rect x="31.6" y="70.4" width="1.2" height="1" fill="#f2e2c0" opacity="0.49"/>
<rect x="34.2" y="70.4" width="1.2" height="1" fill="#f2e2c0" opacity="0.59"/>
<rect x="36.8" y="70.4" width="1.2" height="1" fill="#f2e2c0" opacity="0.46"/>
<rect x="44.6" y="70.4" width="1.2" height="1" fill="#f2e2c0" opacity="0.90"/>
<rect x="47.2" y="70.4" width="1.2" height="1" fill="#f2e2c0" opacity="0.66"/>
<rect x="49.8" y="70.4" width="1.2" height="1" fill="#f2e2c0" opacity="0.82"/>
<rect x="55.0" y="70.4" width="1.2" height="1" fill="#f2e2c0" opacity="0.76"/>
<rect x="31.6" y="72.8" width="1.2" height="1" fill="#f2e2c0" opacity="0.53"/>
<rect x="39.4" y="72.8" width="1.2" height="1" fill="#f2e2c0" opacity="0.73"/>
<rect x="52.4" y="72.8" width="1.2" height="1" fill="#f2e2c0" opacity="0.84"/>
<rect x="34.2" y="75.2" width="1.2" height="1" fill="#f2e2c0" opacity="0.83"/>
<rect x="39.4" y="75.2" width="1.2" height="1" fill="#f2e2c0" opacity="0.36"/>
<rect x="42.0" y="75.2" width="1.2" height="1" fill="#f2e2c0" opacity="0.89"/>
<rect x="44.6" y="75.2" width="1.2" height="1" fill="#f2e2c0" opacity="0.85"/>
<rect x="47.2" y="75.2" width="1.2" height="1" fill="#f2e2c0" opacity="0.75"/>
<rect x="49.8" y="75.2" width="1.2" height="1" fill="#f2e2c0" opacity="0.44"/>
<rect x="55.0" y="75.2" width="1.2" height="1" fill="#f2e2c0" opacity="0.54"/>
<rect x="39.4" y="77.6" width="1.2" height="1" fill="#f2e2c0" opacity="0.48"/>
<rect x="47.2" y="77.6" width="1.2" height="1" fill="#f2e2c0" opacity="0.63"/>
<rect x="49.8" y="77.6" width="1.2" height="1" fill="#f2e2c0" opacity="0.59"/>
<rect x="52.4" y="77.6" width="1.2" height="1" fill="#f2e2c0" opacity="0.36"/>
<rect x="29.0" y="80.0" width="1.2" height="1" fill="#f2e2c0" opacity="0.83"/>
<rect x="31.6" y="80.0" width="1.2" height="1" fill="#f2e2c0" opacity="0.62"/>
<rect x="34.2" y="80.0" width="1.2" height="1" fill="#f2e2c0" opacity="0.59"/>
<rect x="36.8" y="80.0" width="1.2" height="1" fill="#f2e2c0" opacity="0.73"/>
<rect x="39.4" y="80.0" width="1.2" height="1" fill="#f2e2c0" opacity="0.76"/>
<rect x="44.6" y="80.0" width="1.2" height="1" fill="#f2e2c0" opacity="0.54"/>
<rect x="52.4" y="80.0" width="1.2" height="1" fill="#f2e2c0" opacity="0.47"/>
<rect x="34.2" y="82.4" width="1.2" height="1" fill="#f2e2c0" opacity="0.45"/>
<rect x="36.8" y="82.4" width="1.2" height="1" fill="#f2e2c0" opacity="0.39"/>
<rect x="39.4" y="82.4" width="1.2" height="1" fill="#f2e2c0" opacity="0.63"/>
<rect x="49.8" y="82.4" width="1.2" height="1" fill="#f2e2c0" opacity="0.73"/>
<rect x="44.6" y="84.8" width="1.2" height="1" fill="#f2e2c0" opacity="0.58"/>
<rect x="29.0" y="87.2" width="1.2" height="1" fill="#f2e2c0" opacity="0.90"/>
<rect x="31.6" y="87.2" width="1.2" height="1" fill="#f2e2c0" opacity="0.68"/>
<rect x="36.8" y="87.2" width="1.2" height="1" fill="#f2e2c0" opacity="0.69"/>
<rect x="42.0" y="87.2" width="1.2" height="1" fill="#f2e2c0" opacity="0.46"/>
<rect x="44.6" y="87.2" width="1.2" height="1" fill="#f2e2c0" opacity="0.81"/>
<rect x="52.4" y="87.2" width="1.2" height="1" fill="#f2e2c0" opacity="0.73"/>
<rect x="55.0" y="87.2" width="1.2" height="1" fill="#f2e2c0" opacity="0.71"/>
<rect x="204" y="54" width="38" height="48" fill="#968eac"/>
<rect x="204" y="54" width="13.3" height="48" fill="#76708e"/>
<rect x="204" y="54" width="38" height="1.5" fill="#b0b0c8" opacity=".6"/>
<rect x="207.6" y="56.0" width="1.2" height="1" fill="#f2e2c0" opacity="0.88"/>
<rect x="210.2" y="56.0" width="1.2" height="1" fill="#f2e2c0" opacity="0.76"/>
<rect x="223.2" y="56.0" width="1.2" height="1" fill="#f2e2c0" opacity="0.70"/>
<rect x="207.6" y="58.4" width="1.2" height="1" fill="#f2e2c0" opacity="0.70"/>
<rect x="212.8" y="58.4" width="1.2" height="1" fill="#f2e2c0" opacity="0.69"/>
<rect x="215.4" y="58.4" width="1.2" height="1" fill="#f2e2c0" opacity="0.85"/>
<rect x="228.4" y="58.4" width="1.2" height="1" fill="#f2e2c0" opacity="0.43"/>
<rect x="207.6" y="60.8" width="1.2" height="1" fill="#f2e2c0" opacity="0.44"/>
<rect x="225.8" y="60.8" width="1.2" height="1" fill="#f2e2c0" opacity="0.56"/>
<rect x="233.6" y="60.8" width="1.2" height="1" fill="#f2e2c0" opacity="0.43"/>
<rect x="236.2" y="60.8" width="1.2" height="1" fill="#f2e2c0" opacity="0.41"/>
<rect x="212.8" y="63.2" width="1.2" height="1" fill="#f2e2c0" opacity="0.57"/>
<rect x="231.0" y="63.2" width="1.2" height="1" fill="#f2e2c0" opacity="0.72"/>
<rect x="238.8" y="63.2" width="1.2" height="1" fill="#f2e2c0" opacity="0.55"/>
<rect x="205.0" y="65.6" width="1.2" height="1" fill="#f2e2c0" opacity="0.56"/>
<rect x="207.6" y="65.6" width="1.2" height="1" fill="#f2e2c0" opacity="0.46"/>
<rect x="212.8" y="65.6" width="1.2" height="1" fill="#f2e2c0" opacity="0.45"/>
<rect x="218.0" y="65.6" width="1.2" height="1" fill="#f2e2c0" opacity="0.53"/>
<rect x="220.6" y="65.6" width="1.2" height="1" fill="#f2e2c0" opacity="0.81"/>
<rect x="223.2" y="65.6" width="1.2" height="1" fill="#f2e2c0" opacity="0.70"/>
<rect x="228.4" y="65.6" width="1.2" height="1" fill="#f2e2c0" opacity="0.58"/>
<rect x="238.8" y="65.6" width="1.2" height="1" fill="#f2e2c0" opacity="0.59"/>
<rect x="210.2" y="68.0" width="1.2" height="1" fill="#f2e2c0" opacity="0.57"/>
<rect x="228.4" y="68.0" width="1.2" height="1" fill="#f2e2c0" opacity="0.88"/>
<rect x="238.8" y="68.0" width="1.2" height="1" fill="#f2e2c0" opacity="0.39"/>
<rect x="220.6" y="70.4" width="1.2" height="1" fill="#f2e2c0" opacity="0.68"/>
<rect x="220.6" y="72.8" width="1.2" height="1" fill="#f2e2c0" opacity="0.72"/>
<rect x="231.0" y="72.8" width="1.2" height="1" fill="#f2e2c0" opacity="0.47"/>
<rect x="233.6" y="72.8" width="1.2" height="1" fill="#f2e2c0" opacity="0.80"/>
<rect x="236.2" y="72.8" width="1.2" height="1" fill="#f2e2c0" opacity="0.40"/>
<rect x="207.6" y="75.2" width="1.2" height="1" fill="#f2e2c0" opacity="0.72"/>
<rect x="215.4" y="75.2" width="1.2" height="1" fill="#f2e2c0" opacity="0.73"/>
<rect x="231.0" y="75.2" width="1.2" height="1" fill="#f2e2c0" opacity="0.53"/>
<rect x="236.2" y="75.2" width="1.2" height="1" fill="#f2e2c0" opacity="0.89"/>
<rect x="238.8" y="75.2" width="1.2" height="1" fill="#f2e2c0" opacity="0.49"/>
<rect x="205.0" y="77.6" width="1.2" height="1" fill="#f2e2c0" opacity="0.49"/>
<rect x="218.0" y="77.6" width="1.2" height="1" fill="#f2e2c0" opacity="0.52"/>
<rect x="228.4" y="77.6" width="1.2" height="1" fill="#f2e2c0" opacity="0.46"/>
<rect x="231.0" y="77.6" width="1.2" height="1" fill="#f2e2c0" opacity="0.65"/>
<rect x="212.8" y="80.0" width="1.2" height="1" fill="#f2e2c0" opacity="0.86"/>
<rect x="218.0" y="80.0" width="1.2" height="1" fill="#f2e2c0" opacity="0.52"/>
<rect x="228.4" y="80.0" width="1.2" height="1" fill="#f2e2c0" opacity="0.50"/>
<rect x="233.6" y="80.0" width="1.2" height="1" fill="#f2e2c0" opacity="0.74"/>
<rect x="215.4" y="82.4" width="1.2" height="1" fill="#f2e2c0" opacity="0.59"/>
<rect x="220.6" y="82.4" width="1.2" height="1" fill="#f2e2c0" opacity="0.82"/>
<rect x="223.2" y="82.4" width="1.2" height="1" fill="#f2e2c0" opacity="0.68"/>
<rect x="225.8" y="82.4" width="1.2" height="1" fill="#f2e2c0" opacity="0.86"/>
<rect x="205.0" y="84.8" width="1.2" height="1" fill="#f2e2c0" opacity="0.47"/>
<rect x="210.2" y="84.8" width="1.2" height="1" fill="#f2e2c0" opacity="0.85"/>
<rect x="212.8" y="84.8" width="1.2" height="1" fill="#f2e2c0" opacity="0.41"/>
<rect x="215.4" y="84.8" width="1.2" height="1" fill="#f2e2c0" opacity="0.78"/>
<rect x="225.8" y="84.8" width="1.2" height="1" fill="#f2e2c0" opacity="0.85"/>
<rect x="231.0" y="84.8" width="1.2" height="1" fill="#f2e2c0" opacity="0.38"/>
<rect x="236.2" y="84.8" width="1.2" height="1" fill="#f2e2c0" opacity="0.81"/>
<rect x="238.8" y="84.8" width="1.2" height="1" fill="#f2e2c0" opacity="0.48"/>
<rect x="207.6" y="87.2" width="1.2" height="1" fill="#f2e2c0" opacity="0.66"/>
<rect x="210.2" y="87.2" width="1.2" height="1" fill="#f2e2c0" opacity="0.85"/>
<rect x="212.8" y="87.2" width="1.2" height="1" fill="#f2e2c0" opacity="0.81"/>
<rect x="215.4" y="87.2" width="1.2" height="1" fill="#f2e2c0" opacity="0.79"/>
<rect x="223.2" y="87.2" width="1.2" height="1" fill="#f2e2c0" opacity="0.56"/>
<rect x="228.4" y="87.2" width="1.2" height="1" fill="#f2e2c0" opacity="0.65"/>
<rect x="231.0" y="87.2" width="1.2" height="1" fill="#f2e2c0" opacity="0.61"/>
<rect x="205.0" y="89.6" width="1.2" height="1" fill="#f2e2c0" opacity="0.81"/>
<rect x="207.6" y="89.6" width="1.2" height="1" fill="#f2e2c0" opacity="0.86"/>
<rect x="218.0" y="89.6" width="1.2" height="1" fill="#f2e2c0" opacity="0.54"/>
<rect x="228.4" y="89.6" width="1.2" height="1" fill="#f2e2c0" opacity="0.62"/>
<rect x="238.8" y="89.6" width="1.2" height="1" fill="#f2e2c0" opacity="0.43"/>
<rect x="205.0" y="92.0" width="1.2" height="1" fill="#f2e2c0" opacity="0.84"/>
<rect x="210.2" y="92.0" width="1.2" height="1" fill="#f2e2c0" opacity="0.86"/>
<rect x="212.8" y="92.0" width="1.2" height="1" fill="#f2e2c0" opacity="0.68"/>
<rect x="218.0" y="92.0" width="1.2" height="1" fill="#f2e2c0" opacity="0.87"/>
<rect x="223.2" y="92.0" width="1.2" height="1" fill="#f2e2c0" opacity="0.53"/>
<rect x="228.4" y="92.0" width="1.2" height="1" fill="#f2e2c0" opacity="0.76"/>
<rect x="231.0" y="92.0" width="1.2" height="1" fill="#f2e2c0" opacity="0.78"/>
<rect x="233.6" y="92.0" width="1.2" height="1" fill="#f2e2c0" opacity="0.39"/>
<rect x="238.8" y="92.0" width="1.2" height="1" fill="#f2e2c0" opacity="0.65"/>
<rect x="212.8" y="94.4" width="1.2" height="1" fill="#f2e2c0" opacity="0.63"/>
<rect x="215.4" y="94.4" width="1.2" height="1" fill="#f2e2c0" opacity="0.71"/>
<rect x="218.0" y="94.4" width="1.2" height="1" fill="#f2e2c0" opacity="0.67"/>
<rect x="228.4" y="94.4" width="1.2" height="1" fill="#f2e2c0" opacity="0.44"/>
<rect x="233.6" y="94.4" width="1.2" height="1" fill="#f2e2c0" opacity="0.81"/>
<rect x="205.0" y="96.8" width="1.2" height="1" fill="#f2e2c0" opacity="0.40"/>
<rect x="210.2" y="96.8" width="1.2" height="1" fill="#f2e2c0" opacity="0.62"/>
<rect x="215.4" y="96.8" width="1.2" height="1" fill="#f2e2c0" opacity="0.61"/>
<rect x="218.0" y="96.8" width="1.2" height="1" fill="#f2e2c0" opacity="0.64"/>
<rect x="225.8" y="96.8" width="1.2" height="1" fill="#f2e2c0" opacity="0.57"/>
<rect x="228.4" y="96.8" width="1.2" height="1" fill="#f2e2c0" opacity="0.42"/>
<rect x="231.0" y="96.8" width="1.2" height="1" fill="#f2e2c0" opacity="0.83"/>
<rect x="238.8" y="96.8" width="1.2" height="1" fill="#f2e2c0" opacity="0.87"/>
<rect x="215.4" y="99.2" width="1.2" height="1" fill="#f2e2c0" opacity="0.76"/>
<rect x="218.0" y="99.2" width="1.2" height="1" fill="#f2e2c0" opacity="0.50"/>
<rect x="220.6" y="99.2" width="1.2" height="1" fill="#f2e2c0" opacity="0.57"/>
<rect x="225.8" y="99.2" width="1.2" height="1" fill="#f2e2c0" opacity="0.84"/>
<rect x="228.4" y="99.2" width="1.2" height="1" fill="#f2e2c0" opacity="0.67"/>
<rect x="231.0" y="99.2" width="1.2" height="1" fill="#f2e2c0" opacity="0.68"/>
<rect x="238.8" y="99.2" width="1.2" height="1" fill="#f2e2c0" opacity="0.49"/>
<rect x="245" y="35" width="20" height="50" fill="#8a86a6"/>
<rect x="245" y="35" width="7.0" height="50" fill="#6a6a8e"/>
<rect x="245" y="35" width="20" height="1.5" fill="#b0b0c8" opacity=".6"/>
<rect x="251.2" y="37.0" width="1.2" height="1" fill="#f2e2c0" opacity="0.69"/>
<rect x="259.0" y="37.0" width="1.2" height="1" fill="#f2e2c0" opacity="0.80"/>
<rect x="248.6" y="39.4" width="1.2" height="1" fill="#f2e2c0" opacity="0.87"/>
<rect x="256.4" y="39.4" width="1.2" height="1" fill="#f2e2c0" opacity="0.48"/>
<rect x="246.0" y="41.8" width="1.2" height="1" fill="#f2e2c0" opacity="0.54"/>
<rect x="248.6" y="41.8" width="1.2" height="1" fill="#f2e2c0" opacity="0.46"/>
<rect x="251.2" y="41.8" width="1.2" height="1" fill="#f2e2c0" opacity="0.53"/>
<rect x="259.0" y="44.2" width="1.2" height="1" fill="#f2e2c0" opacity="0.69"/>
<rect x="248.6" y="46.6" width="1.2" height="1" fill="#f2e2c0" opacity="0.74"/>
<rect x="251.2" y="46.6" width="1.2" height="1" fill="#f2e2c0" opacity="0.44"/>
<rect x="261.6" y="46.6" width="1.2" height="1" fill="#f2e2c0" opacity="0.81"/>
<rect x="253.8" y="51.4" width="1.2" height="1" fill="#f2e2c0" opacity="0.88"/>
<rect x="261.6" y="51.4" width="1.2" height="1" fill="#f2e2c0" opacity="0.88"/>
<rect x="248.6" y="53.8" width="1.2" height="1" fill="#f2e2c0" opacity="0.81"/>
<rect x="251.2" y="53.8" width="1.2" height="1" fill="#f2e2c0" opacity="0.46"/>
<rect x="256.4" y="53.8" width="1.2" height="1" fill="#f2e2c0" opacity="0.62"/>
<rect x="248.6" y="58.6" width="1.2" height="1" fill="#f2e2c0" opacity="0.71"/>
<rect x="253.8" y="58.6" width="1.2" height="1" fill="#f2e2c0" opacity="0.68"/>
<rect x="261.6" y="58.6" width="1.2" height="1" fill="#f2e2c0" opacity="0.62"/>
<rect x="246.0" y="61.0" width="1.2" height="1" fill="#f2e2c0" opacity="0.41"/>
<rect x="259.0" y="61.0" width="1.2" height="1" fill="#f2e2c0" opacity="0.47"/>
<rect x="251.2" y="63.4" width="1.2" height="1" fill="#f2e2c0" opacity="0.40"/>
<rect x="253.8" y="63.4" width="1.2" height="1" fill="#f2e2c0" opacity="0.74"/>
<rect x="246.0" y="65.8" width="1.2" height="1" fill="#f2e2c0" opacity="0.73"/>
<rect x="248.6" y="65.8" width="1.2" height="1" fill="#f2e2c0" opacity="0.80"/>
<rect x="251.2" y="65.8" width="1.2" height="1" fill="#f2e2c0" opacity="0.50"/>
<rect x="259.0" y="65.8" width="1.2" height="1" fill="#f2e2c0" opacity="0.84"/>
<rect x="261.6" y="68.2" width="1.2" height="1" fill="#f2e2c0" opacity="0.81"/>
<rect x="246.0" y="70.6" width="1.2" height="1" fill="#f2e2c0" opacity="0.64"/>
<rect x="248.6" y="70.6" width="1.2" height="1" fill="#f2e2c0" opacity="0.45"/>
<rect x="259.0" y="70.6" width="1.2" height="1" fill="#f2e2c0" opacity="0.54"/>
<rect x="261.6" y="70.6" width="1.2" height="1" fill="#f2e2c0" opacity="0.65"/>
<rect x="261.6" y="73.0" width="1.2" height="1" fill="#f2e2c0" opacity="0.69"/>
<rect x="259.0" y="77.8" width="1.2" height="1" fill="#f2e2c0" opacity="0.81"/>
<rect x="261.6" y="80.2" width="1.2" height="1" fill="#f2e2c0" opacity="0.53"/>
<rect x="246.0" y="82.6" width="1.2" height="1" fill="#f2e2c0" opacity="0.87"/>
<rect x="251.2" y="82.6" width="1.2" height="1" fill="#f2e2c0" opacity="0.67"/>
<rect x="256.4" y="82.6" width="1.2" height="1" fill="#f2e2c0" opacity="0.57"/>
<rect x="0" y="68" width="36" height="37" fill="#8e7e94"/>
<rect x="0" y="68" width="12.6" height="37" fill="#6e6478"/>
<rect x="0" y="68" width="36" height="1.5" fill="#b0b0c8" opacity=".6"/>
<rect x="1.0" y="70.0" width="1.2" height="1" fill="#f2e2c0" opacity="0.77"/>
<rect x="3.6" y="70.0" width="1.2" height="1" fill="#f2e2c0" opacity="0.65"/>
<rect x="29.6" y="70.0" width="1.2" height="1" fill="#f2e2c0" opacity="0.44"/>
<rect x="3.6" y="72.4" width="1.2" height="1" fill="#f2e2c0" opacity="0.43"/>
<rect x="11.4" y="72.4" width="1.2" height="1" fill="#f2e2c0" opacity="0.76"/>
<rect x="14.0" y="72.4" width="1.2" height="1" fill="#f2e2c0" opacity="0.52"/>
<rect x="16.6" y="72.4" width="1.2" height="1" fill="#f2e2c0" opacity="0.51"/>
<rect x="27.0" y="72.4" width="1.2" height="1" fill="#f2e2c0" opacity="0.52"/>
<rect x="32.2" y="72.4" width="1.2" height="1" fill="#f2e2c0" opacity="0.53"/>
<rect x="1.0" y="74.8" width="1.2" height="1" fill="#f2e2c0" opacity="0.49"/>
<rect x="11.4" y="74.8" width="1.2" height="1" fill="#f2e2c0" opacity="0.46"/>
<rect x="27.0" y="74.8" width="1.2" height="1" fill="#f2e2c0" opacity="0.43"/>
<rect x="6.2" y="77.2" width="1.2" height="1" fill="#f2e2c0" opacity="0.55"/>
<rect x="14.0" y="77.2" width="1.2" height="1" fill="#f2e2c0" opacity="0.70"/>
<rect x="16.6" y="77.2" width="1.2" height="1" fill="#f2e2c0" opacity="0.77"/>
<rect x="19.2" y="77.2" width="1.2" height="1" fill="#f2e2c0" opacity="0.80"/>
<rect x="29.6" y="77.2" width="1.2" height="1" fill="#f2e2c0" opacity="0.48"/>
<rect x="32.2" y="77.2" width="1.2" height="1" fill="#f2e2c0" opacity="0.65"/>
<rect x="8.8" y="79.6" width="1.2" height="1" fill="#f2e2c0" opacity="0.52"/>
<rect x="32.2" y="79.6" width="1.2" height="1" fill="#f2e2c0" opacity="0.57"/>
<rect x="1.0" y="82.0" width="1.2" height="1" fill="#f2e2c0" opacity="0.45"/>
<rect x="16.6" y="82.0" width="1.2" height="1" fill="#f2e2c0" opacity="0.54"/>
<rect x="19.2" y="82.0" width="1.2" height="1" fill="#f2e2c0" opacity="0.58"/>
<rect x="1.0" y="84.4" width="1.2" height="1" fill="#f2e2c0" opacity="0.81"/>
<rect x="8.8" y="84.4" width="1.2" height="1" fill="#f2e2c0" opacity="0.72"/>
<rect x="32.2" y="84.4" width="1.2" height="1" fill="#f2e2c0" opacity="0.74"/>
<rect x="3.6" y="86.8" width="1.2" height="1" fill="#f2e2c0" opacity="0.39"/>
<rect x="11.4" y="86.8" width="1.2" height="1" fill="#f2e2c0" opacity="0.47"/>
<rect x="14.0" y="86.8" width="1.2" height="1" fill="#f2e2c0" opacity="0.40"/>
<rect x="29.6" y="86.8" width="1.2" height="1" fill="#f2e2c0" opacity="0.81"/>
<rect x="32.2" y="86.8" width="1.2" height="1" fill="#f2e2c0" opacity="0.35"/>
<rect x="1.0" y="89.2" width="1.2" height="1" fill="#f2e2c0" opacity="0.50"/>
<rect x="3.6" y="89.2" width="1.2" height="1" fill="#f2e2c0" opacity="0.60"/>
<rect x="11.4" y="89.2" width="1.2" height="1" fill="#f2e2c0" opacity="0.81"/>
<rect x="14.0" y="89.2" width="1.2" height="1" fill="#f2e2c0" opacity="0.47"/>
<rect x="19.2" y="89.2" width="1.2" height="1" fill="#f2e2c0" opacity="0.53"/>
<rect x="24.4" y="89.2" width="1.2" height="1" fill="#f2e2c0" opacity="0.79"/>
<rect x="27.0" y="89.2" width="1.2" height="1" fill="#f2e2c0" opacity="0.81"/>
<rect x="34.8" y="89.2" width="1.2" height="1" fill="#f2e2c0" opacity="0.78"/>
<rect x="1.0" y="91.6" width="1.2" height="1" fill="#f2e2c0" opacity="0.63"/>
<rect x="6.2" y="91.6" width="1.2" height="1" fill="#f2e2c0" opacity="0.70"/>
<rect x="21.8" y="91.6" width="1.2" height="1" fill="#f2e2c0" opacity="0.83"/>
<rect x="32.2" y="91.6" width="1.2" height="1" fill="#f2e2c0" opacity="0.89"/>
<rect x="34.8" y="91.6" width="1.2" height="1" fill="#f2e2c0" opacity="0.61"/>
<rect x="1.0" y="94.0" width="1.2" height="1" fill="#f2e2c0" opacity="0.60"/>
<rect x="11.4" y="94.0" width="1.2" height="1" fill="#f2e2c0" opacity="0.45"/>
<rect x="16.6" y="94.0" width="1.2" height="1" fill="#f2e2c0" opacity="0.46"/>
<rect x="27.0" y="94.0" width="1.2" height="1" fill="#f2e2c0" opacity="0.74"/>
<rect x="29.6" y="94.0" width="1.2" height="1" fill="#f2e2c0" opacity="0.50"/>
<rect x="16.6" y="96.4" width="1.2" height="1" fill="#f2e2c0" opacity="0.46"/>
<rect x="19.2" y="96.4" width="1.2" height="1" fill="#f2e2c0" opacity="0.82"/>
<rect x="27.0" y="96.4" width="1.2" height="1" fill="#f2e2c0" opacity="0.55"/>
<rect x="29.6" y="96.4" width="1.2" height="1" fill="#f2e2c0" opacity="0.70"/>
<rect x="34.8" y="96.4" width="1.2" height="1" fill="#f2e2c0" opacity="0.37"/>
<rect x="1.0" y="98.8" width="1.2" height="1" fill="#f2e2c0" opacity="0.55"/>
<rect x="11.4" y="98.8" width="1.2" height="1" fill="#f2e2c0" opacity="0.41"/>
<rect x="14.0" y="98.8" width="1.2" height="1" fill="#f2e2c0" opacity="0.78"/>
<rect x="32.2" y="98.8" width="1.2" height="1" fill="#f2e2c0" opacity="0.41"/>
<rect x="3.6" y="101.2" width="1.2" height="1" fill="#f2e2c0" opacity="0.49"/>
<rect x="6.2" y="101.2" width="1.2" height="1" fill="#f2e2c0" opacity="0.85"/>
<rect x="29.6" y="101.2" width="1.2" height="1" fill="#f2e2c0" opacity="0.36"/>
<rect x="32.2" y="101.2" width="1.2" height="1" fill="#f2e2c0" opacity="0.67"/>
<rect x="1.0" y="103.6" width="1.2" height="1" fill="#f2e2c0" opacity="0.81"/>
<rect x="8.8" y="103.6" width="1.2" height="1" fill="#f2e2c0" opacity="0.84"/>
<rect x="14.0" y="103.6" width="1.2" height="1" fill="#f2e2c0" opacity="0.53"/>
<rect x="27.0" y="103.6" width="1.2" height="1" fill="#f2e2c0" opacity="0.48"/>
<rect x="34.8" y="103.6" width="1.2" height="1" fill="#f2e2c0" opacity="0.68"/>
<rect x="2" y="67" width="32" height="2.5" fill="#62a2ae" opacity=".85"/>
<polygon points="36,86 67,84 67,122 38,118" fill="#38443e"/>
<circle cx="43.3" cy="94.0" r="1.2" fill="#e8e090" opacity=".7"/>
<circle cx="55.2" cy="107.1" r="1.4" fill="#e8e090" opacity=".7"/>
<circle cx="51.4" cy="90.0" r="1.4" fill="#e8e090" opacity=".7"/>
<circle cx="41.4" cy="102.1" r="1.1" fill="#e8e090" opacity=".7"/>
<circle cx="57.5" cy="109.4" r="1.0" fill="#e8e090" opacity=".7"/>
<circle cx="56.9" cy="108.8" r="1.2" fill="#e8e090" opacity=".7"/>
<circle cx="43.7" cy="115.3" r="1.3" fill="#e8e090" opacity=".7"/>
<circle cx="41.6" cy="95.2" r="1.6" fill="#e8e090" opacity=".7"/>
<circle cx="45.9" cy="99.8" r="1.4" fill="#e8e090" opacity=".7"/>
<circle cx="61.4" cy="107.0" r="1.4" fill="#e8e090" opacity=".7"/>
<rect x="155" y="73" width="51" height="44" fill="#a292a8"/>
<rect x="155" y="73" width="17.8" height="44" fill="#826f88"/>
<rect x="155" y="73" width="51" height="1.5" fill="#b0b0c8" opacity=".6"/>
<rect x="156.0" y="75.0" width="1.2" height="1" fill="#f2e2c0" opacity="0.40"/>
<rect x="163.8" y="75.0" width="1.2" height="1" fill="#f2e2c0" opacity="0.38"/>
<rect x="166.4" y="75.0" width="1.2" height="1" fill="#f2e2c0" opacity="0.86"/>
<rect x="169.0" y="75.0" width="1.2" height="1" fill="#f2e2c0" opacity="0.72"/>
<rect x="179.4" y="75.0" width="1.2" height="1" fill="#f2e2c0" opacity="0.43"/>
<rect x="182.0" y="75.0" width="1.2" height="1" fill="#f2e2c0" opacity="0.77"/>
<rect x="184.6" y="75.0" width="1.2" height="1" fill="#f2e2c0" opacity="0.89"/>
<rect x="189.8" y="75.0" width="1.2" height="1" fill="#f2e2c0" opacity="0.79"/>
<rect x="192.4" y="75.0" width="1.2" height="1" fill="#f2e2c0" opacity="0.63"/>
<rect x="195.0" y="75.0" width="1.2" height="1" fill="#f2e2c0" opacity="0.78"/>
<rect x="202.8" y="75.0" width="1.2" height="1" fill="#f2e2c0" opacity="0.82"/>
<rect x="171.6" y="77.4" width="1.2" height="1" fill="#f2e2c0" opacity="0.38"/>
<rect x="176.8" y="77.4" width="1.2" height="1" fill="#f2e2c0" opacity="0.57"/>
<rect x="179.4" y="77.4" width="1.2" height="1" fill="#f2e2c0" opacity="0.76"/>
<rect x="182.0" y="77.4" width="1.2" height="1" fill="#f2e2c0" opacity="0.81"/>
<rect x="189.8" y="77.4" width="1.2" height="1" fill="#f2e2c0" opacity="0.71"/>
<rect x="192.4" y="77.4" width="1.2" height="1" fill="#f2e2c0" opacity="0.59"/>
<rect x="195.0" y="77.4" width="1.2" height="1" fill="#f2e2c0" opacity="0.89"/>
<rect x="202.8" y="77.4" width="1.2" height="1" fill="#f2e2c0" opacity="0.75"/>
<rect x="161.2" y="79.8" width="1.2" height="1" fill="#f2e2c0" opacity="0.55"/>
<rect x="163.8" y="79.8" width="1.2" height="1" fill="#f2e2c0" opacity="0.77"/>
<rect x="166.4" y="79.8" width="1.2" height="1" fill="#f2e2c0" opacity="0.68"/>
<rect x="174.2" y="79.8" width="1.2" height="1" fill="#f2e2c0" opacity="0.39"/>
<rect x="176.8" y="79.8" width="1.2" height="1" fill="#f2e2c0" opacity="0.73"/>
<rect x="161.2" y="82.2" width="1.2" height="1" fill="#f2e2c0" opacity="0.72"/>
<rect x="171.6" y="82.2" width="1.2" height="1" fill="#f2e2c0" opacity="0.87"/>
<rect x="179.4" y="82.2" width="1.2" height="1" fill="#f2e2c0" opacity="0.52"/>
<rect x="182.0" y="82.2" width="1.2" height="1" fill="#f2e2c0" opacity="0.53"/>
<rect x="184.6" y="82.2" width="1.2" height="1" fill="#f2e2c0" opacity="0.59"/>
<rect x="156.0" y="84.6" width="1.2" height="1" fill="#f2e2c0" opacity="0.49"/>
<rect x="161.2" y="84.6" width="1.2" height="1" fill="#f2e2c0" opacity="0.48"/>
<rect x="169.0" y="84.6" width="1.2" height="1" fill="#f2e2c0" opacity="0.77"/>
<rect x="182.0" y="84.6" width="1.2" height="1" fill="#f2e2c0" opacity="0.80"/>
<rect x="184.6" y="84.6" width="1.2" height="1" fill="#f2e2c0" opacity="0.69"/>
<rect x="195.0" y="84.6" width="1.2" height="1" fill="#f2e2c0" opacity="0.64"/>
<rect x="166.4" y="87.0" width="1.2" height="1" fill="#f2e2c0" opacity="0.47"/>
<rect x="169.0" y="87.0" width="1.2" height="1" fill="#f2e2c0" opacity="0.85"/>
<rect x="171.6" y="87.0" width="1.2" height="1" fill="#f2e2c0" opacity="0.49"/>
<rect x="179.4" y="87.0" width="1.2" height="1" fill="#f2e2c0" opacity="0.59"/>
<rect x="192.4" y="87.0" width="1.2" height="1" fill="#f2e2c0" opacity="0.49"/>
<rect x="195.0" y="87.0" width="1.2" height="1" fill="#f2e2c0" opacity="0.73"/>
<rect x="197.6" y="87.0" width="1.2" height="1" fill="#f2e2c0" opacity="0.49"/>
<rect x="166.4" y="89.4" width="1.2" height="1" fill="#f2e2c0" opacity="0.39"/>
<rect x="169.0" y="89.4" width="1.2" height="1" fill="#f2e2c0" opacity="0.36"/>
<rect x="174.2" y="89.4" width="1.2" height="1" fill="#f2e2c0" opacity="0.41"/>
<rect x="184.6" y="89.4" width="1.2" height="1" fill="#f2e2c0" opacity="0.77"/>
<rect x="187.2" y="89.4" width="1.2" height="1" fill="#f2e2c0" opacity="0.41"/>
<rect x="189.8" y="89.4" width="1.2" height="1" fill="#f2e2c0" opacity="0.57"/>
<rect x="200.2" y="89.4" width="1.2" height="1" fill="#f2e2c0" opacity="0.86"/>
<rect x="202.8" y="89.4" width="1.2" height="1" fill="#f2e2c0" opacity="0.81"/>
<rect x="156.0" y="91.8" width="1.2" height="1" fill="#f2e2c0" opacity="0.81"/>
<rect x="158.6" y="91.8" width="1.2" height="1" fill="#f2e2c0" opacity="0.82"/>
<rect x="166.4" y="91.8" width="1.2" height="1" fill="#f2e2c0" opacity="0.36"/>
<rect x="169.0" y="91.8" width="1.2" height="1" fill="#f2e2c0" opacity="0.85"/>
<rect x="171.6" y="91.8" width="1.2" height="1" fill="#f2e2c0" opacity="0.71"/>
<rect x="179.4" y="91.8" width="1.2" height="1" fill="#f2e2c0" opacity="0.43"/>
<rect x="182.0" y="91.8" width="1.2" height="1" fill="#f2e2c0" opacity="0.89"/>
<rect x="192.4" y="91.8" width="1.2" height="1" fill="#f2e2c0" opacity="0.39"/>
<rect x="195.0" y="91.8" width="1.2" height="1" fill="#f2e2c0" opacity="0.82"/>
<rect x="197.6" y="91.8" width="1.2" height="1" fill="#f2e2c0" opacity="0.88"/>
<rect x="156.0" y="94.2" width="1.2" height="1" fill="#f2e2c0" opacity="0.78"/>
<rect x="158.6" y="94.2" width="1.2" height="1" fill="#f2e2c0" opacity="0.55"/>
<rect x="163.8" y="94.2" width="1.2" height="1" fill="#f2e2c0" opacity="0.49"/>
<rect x="169.0" y="94.2" width="1.2" height="1" fill="#f2e2c0" opacity="0.56"/>
<rect x="174.2" y="94.2" width="1.2" height="1" fill="#f2e2c0" opacity="0.46"/>
<rect x="176.8" y="94.2" width="1.2" height="1" fill="#f2e2c0" opacity="0.56"/>
<rect x="189.8" y="94.2" width="1.2" height="1" fill="#f2e2c0" opacity="0.71"/>
<rect x="195.0" y="94.2" width="1.2" height="1" fill="#f2e2c0" opacity="0.37"/>
<rect x="200.2" y="94.2" width="1.2" height="1" fill="#f2e2c0" opacity="0.60"/>
<rect x="156.0" y="96.6" width="1.2" height="1" fill="#f2e2c0" opacity="0.41"/>
<rect x="161.2" y="96.6" width="1.2" height="1" fill="#f2e2c0" opacity="0.48"/>
<rect x="166.4" y="96.6" width="1.2" height="1" fill="#f2e2c0" opacity="0.39"/>
<rect x="179.4" y="96.6" width="1.2" height="1" fill="#f2e2c0" opacity="0.47"/>
<rect x="195.0" y="96.6" width="1.2" height="1" fill="#f2e2c0" opacity="0.87"/>
<rect x="200.2" y="96.6" width="1.2" height="1" fill="#f2e2c0" opacity="0.44"/>
<rect x="156.0" y="99.0" width="1.2" height="1" fill="#f2e2c0" opacity="0.40"/>
<rect x="158.6" y="99.0" width="1.2" height="1" fill="#f2e2c0" opacity="0.86"/>
<rect x="166.4" y="99.0" width="1.2" height="1" fill="#f2e2c0" opacity="0.60"/>
<rect x="169.0" y="99.0" width="1.2" height="1" fill="#f2e2c0" opacity="0.46"/>
<rect x="176.8" y="99.0" width="1.2" height="1" fill="#f2e2c0" opacity="0.89"/>
<rect x="182.0" y="99.0" width="1.2" height="1" fill="#f2e2c0" opacity="0.36"/>
<rect x="189.8" y="99.0" width="1.2" height="1" fill="#f2e2c0" opacity="0.61"/>
<rect x="197.6" y="99.0" width="1.2" height="1" fill="#f2e2c0" opacity="0.62"/>
<rect x="156.0" y="101.4" width="1.2" height="1" fill="#f2e2c0" opacity="0.79"/>
<rect x="171.6" y="101.4" width="1.2" height="1" fill="#f2e2c0" opacity="0.47"/>
<rect x="179.4" y="101.4" width="1.2" height="1" fill="#f2e2c0" opacity="0.47"/>
<rect x="182.0" y="101.4" width="1.2" height="1" fill="#f2e2c0" opacity="0.59"/>
<rect x="184.6" y="101.4" width="1.2" height="1" fill="#f2e2c0" opacity="0.46"/>
<rect x="200.2" y="101.4" width="1.2" height="1" fill="#f2e2c0" opacity="0.87"/>
<rect x="202.8" y="101.4" width="1.2" height="1" fill="#f2e2c0" opacity="0.61"/>
<rect x="169.0" y="103.8" width="1.2" height="1" fill="#f2e2c0" opacity="0.81"/>
<rect x="171.6" y="103.8" width="1.2" height="1" fill="#f2e2c0" opacity="0.90"/>
<rect x="176.8" y="103.8" width="1.2" height="1" fill="#f2e2c0" opacity="0.88"/>
<rect x="179.4" y="103.8" width="1.2" height="1" fill="#f2e2c0" opacity="0.57"/>
<rect x="182.0" y="103.8" width="1.2" height="1" fill="#f2e2c0" opacity="0.72"/>
<rect x="184.6" y="103.8" width="1.2" height="1" fill="#f2e2c0" opacity="0.56"/>
<rect x="187.2" y="103.8" width="1.2" height="1" fill="#f2e2c0" opacity="0.81"/>
<rect x="189.8" y="103.8" width="1.2" height="1" fill="#f2e2c0" opacity="0.68"/>
<rect x="192.4" y="103.8" width="1.2" height="1" fill="#f2e2c0" opacity="0.60"/>
<rect x="200.2" y="103.8" width="1.2" height="1" fill="#f2e2c0" opacity="0.48"/>
<rect x="202.8" y="103.8" width="1.2" height="1" fill="#f2e2c0" opacity="0.88"/>
<rect x="156.0" y="106.2" width="1.2" height="1" fill="#f2e2c0" opacity="0.43"/>
<rect x="166.4" y="106.2" width="1.2" height="1" fill="#f2e2c0" opacity="0.48"/>
<rect x="169.0" y="106.2" width="1.2" height="1" fill="#f2e2c0" opacity="0.67"/>
<rect x="187.2" y="106.2" width="1.2" height="1" fill="#f2e2c0" opacity="0.87"/>
<rect x="192.4" y="106.2" width="1.2" height="1" fill="#f2e2c0" opacity="0.85"/>
<rect x="195.0" y="106.2" width="1.2" height="1" fill="#f2e2c0" opacity="0.36"/>
<rect x="197.6" y="106.2" width="1.2" height="1" fill="#f2e2c0" opacity="0.51"/>
<rect x="171.6" y="108.6" width="1.2" height="1" fill="#f2e2c0" opacity="0.48"/>
<rect x="187.2" y="108.6" width="1.2" height="1" fill="#f2e2c0" opacity="0.39"/>
<rect x="195.0" y="108.6" width="1.2" height="1" fill="#f2e2c0" opacity="0.73"/>
<rect x="197.6" y="108.6" width="1.2" height="1" fill="#f2e2c0" opacity="0.48"/>
<rect x="158.6" y="111.0" width="1.2" height="1" fill="#f2e2c0" opacity="0.76"/>
<rect x="171.6" y="111.0" width="1.2" height="1" fill="#f2e2c0" opacity="0.61"/>
<rect x="182.0" y="111.0" width="1.2" height="1" fill="#f2e2c0" opacity="0.88"/>
<rect x="187.2" y="111.0" width="1.2" height="1" fill="#f2e2c0" opacity="0.59"/>
<rect x="192.4" y="111.0" width="1.2" height="1" fill="#f2e2c0" opacity="0.58"/>
<rect x="200.2" y="111.0" width="1.2" height="1" fill="#f2e2c0" opacity="0.75"/>
<rect x="161.2" y="113.4" width="1.2" height="1" fill="#f2e2c0" opacity="0.47"/>
<rect x="163.8" y="113.4" width="1.2" height="1" fill="#f2e2c0" opacity="0.50"/>
<rect x="166.4" y="113.4" width="1.2" height="1" fill="#f2e2c0" opacity="0.42"/>
<rect x="174.2" y="113.4" width="1.2" height="1" fill="#f2e2c0" opacity="0.67"/>
<rect x="189.8" y="113.4" width="1.2" height="1" fill="#f2e2c0" opacity="0.61"/>
<rect x="192.4" y="113.4" width="1.2" height="1" fill="#f2e2c0" opacity="0.72"/>
<rect x="195.0" y="113.4" width="1.2" height="1" fill="#f2e2c0" opacity="0.55"/>
<rect x="166.4" y="115.8" width="1.2" height="1" fill="#f2e2c0" opacity="0.77"/>
<rect x="169.0" y="115.8" width="1.2" height="1" fill="#f2e2c0" opacity="0.49"/>
<rect x="184.6" y="115.8" width="1.2" height="1" fill="#f2e2c0" opacity="0.36"/>
<rect x="192.4" y="115.8" width="1.2" height="1" fill="#f2e2c0" opacity="0.39"/>
<rect x="195.0" y="115.8" width="1.2" height="1" fill="#f2e2c0" opacity="0.45"/>
<rect x="200.2" y="115.8" width="1.2" height="1" fill="#f2e2c0" opacity="0.48"/>
<rect x="202.8" y="115.8" width="1.2" height="1" fill="#f2e2c0" opacity="0.74"/>
<rect x="155" y="72" width="51" height="2.5" fill="#5e9cac" opacity=".8"/>
<rect x="67" y="79" width="33" height="46" fill="#a08c9e"/>
<rect x="67" y="79" width="11.5" height="46" fill="#806c80"/>
<rect x="67" y="79" width="33" height="1.5" fill="#b0b0c8" opacity=".6"/>
<rect x="70.6" y="81.0" width="1.2" height="1" fill="#f2e2c0" opacity="0.41"/>
<rect x="78.4" y="81.0" width="1.2" height="1" fill="#f2e2c0" opacity="0.53"/>
<rect x="83.6" y="81.0" width="1.2" height="1" fill="#f2e2c0" opacity="0.58"/>
<rect x="88.8" y="81.0" width="1.2" height="1" fill="#f2e2c0" opacity="0.38"/>
<rect x="91.4" y="81.0" width="1.2" height="1" fill="#f2e2c0" opacity="0.44"/>
<rect x="94.0" y="81.0" width="1.2" height="1" fill="#f2e2c0" opacity="0.69"/>
<rect x="68.0" y="83.4" width="1.2" height="1" fill="#f2e2c0" opacity="0.79"/>
<rect x="73.2" y="83.4" width="1.2" height="1" fill="#f2e2c0" opacity="0.62"/>
<rect x="75.8" y="83.4" width="1.2" height="1" fill="#f2e2c0" opacity="0.86"/>
<rect x="81.0" y="83.4" width="1.2" height="1" fill="#f2e2c0" opacity="0.43"/>
<rect x="91.4" y="83.4" width="1.2" height="1" fill="#f2e2c0" opacity="0.79"/>
<rect x="96.6" y="83.4" width="1.2" height="1" fill="#f2e2c0" opacity="0.67"/>
<rect x="68.0" y="85.8" width="1.2" height="1" fill="#f2e2c0" opacity="0.74"/>
<rect x="75.8" y="85.8" width="1.2" height="1" fill="#f2e2c0" opacity="0.40"/>
<rect x="83.6" y="85.8" width="1.2" height="1" fill="#f2e2c0" opacity="0.46"/>
<rect x="88.8" y="85.8" width="1.2" height="1" fill="#f2e2c0" opacity="0.70"/>
<rect x="91.4" y="85.8" width="1.2" height="1" fill="#f2e2c0" opacity="0.49"/>
<rect x="70.6" y="88.2" width="1.2" height="1" fill="#f2e2c0" opacity="0.75"/>
<rect x="73.2" y="88.2" width="1.2" height="1" fill="#f2e2c0" opacity="0.51"/>
<rect x="86.2" y="88.2" width="1.2" height="1" fill="#f2e2c0" opacity="0.52"/>
<rect x="91.4" y="88.2" width="1.2" height="1" fill="#f2e2c0" opacity="0.44"/>
<rect x="94.0" y="88.2" width="1.2" height="1" fill="#f2e2c0" opacity="0.77"/>
<rect x="75.8" y="90.6" width="1.2" height="1" fill="#f2e2c0" opacity="0.52"/>
<rect x="81.0" y="90.6" width="1.2" height="1" fill="#f2e2c0" opacity="0.69"/>
<rect x="83.6" y="90.6" width="1.2" height="1" fill="#f2e2c0" opacity="0.38"/>
<rect x="88.8" y="90.6" width="1.2" height="1" fill="#f2e2c0" opacity="0.86"/>
<rect x="96.6" y="90.6" width="1.2" height="1" fill="#f2e2c0" opacity="0.42"/>
<rect x="83.6" y="93.0" width="1.2" height="1" fill="#f2e2c0" opacity="0.39"/>
<rect x="91.4" y="93.0" width="1.2" height="1" fill="#f2e2c0" opacity="0.72"/>
<rect x="94.0" y="93.0" width="1.2" height="1" fill="#f2e2c0" opacity="0.53"/>
<rect x="86.2" y="95.4" width="1.2" height="1" fill="#f2e2c0" opacity="0.60"/>
<rect x="91.4" y="95.4" width="1.2" height="1" fill="#f2e2c0" opacity="0.37"/>
<rect x="68.0" y="97.8" width="1.2" height="1" fill="#f2e2c0" opacity="0.61"/>
<rect x="73.2" y="97.8" width="1.2" height="1" fill="#f2e2c0" opacity="0.39"/>
<rect x="83.6" y="97.8" width="1.2" height="1" fill="#f2e2c0" opacity="0.57"/>
<rect x="86.2" y="97.8" width="1.2" height="1" fill="#f2e2c0" opacity="0.88"/>
<rect x="88.8" y="97.8" width="1.2" height="1" fill="#f2e2c0" opacity="0.51"/>
<rect x="94.0" y="97.8" width="1.2" height="1" fill="#f2e2c0" opacity="0.41"/>
<rect x="96.6" y="97.8" width="1.2" height="1" fill="#f2e2c0" opacity="0.44"/>
<rect x="73.2" y="100.2" width="1.2" height="1" fill="#f2e2c0" opacity="0.45"/>
<rect x="81.0" y="100.2" width="1.2" height="1" fill="#f2e2c0" opacity="0.42"/>
<rect x="83.6" y="100.2" width="1.2" height="1" fill="#f2e2c0" opacity="0.88"/>
<rect x="86.2" y="100.2" width="1.2" height="1" fill="#f2e2c0" opacity="0.49"/>
<rect x="73.2" y="102.6" width="1.2" height="1" fill="#f2e2c0" opacity="0.61"/>
<rect x="81.0" y="102.6" width="1.2" height="1" fill="#f2e2c0" opacity="0.46"/>
<rect x="86.2" y="102.6" width="1.2" height="1" fill="#f2e2c0" opacity="0.80"/>
<rect x="88.8" y="102.6" width="1.2" height="1" fill="#f2e2c0" opacity="0.49"/>
<rect x="91.4" y="102.6" width="1.2" height="1" fill="#f2e2c0" opacity="0.61"/>
<rect x="96.6" y="102.6" width="1.2" height="1" fill="#f2e2c0" opacity="0.82"/>
<rect x="68.0" y="105.0" width="1.2" height="1" fill="#f2e2c0" opacity="0.45"/>
<rect x="73.2" y="105.0" width="1.2" height="1" fill="#f2e2c0" opacity="0.45"/>
<rect x="86.2" y="105.0" width="1.2" height="1" fill="#f2e2c0" opacity="0.77"/>
<rect x="96.6" y="105.0" width="1.2" height="1" fill="#f2e2c0" opacity="0.82"/>
<rect x="70.6" y="107.4" width="1.2" height="1" fill="#f2e2c0" opacity="0.55"/>
<rect x="81.0" y="107.4" width="1.2" height="1" fill="#f2e2c0" opacity="0.47"/>
<rect x="96.6" y="107.4" width="1.2" height="1" fill="#f2e2c0" opacity="0.86"/>
<rect x="81.0" y="109.8" width="1.2" height="1" fill="#f2e2c0" opacity="0.71"/>
<rect x="88.8" y="109.8" width="1.2" height="1" fill="#f2e2c0" opacity="0.65"/>
<rect x="91.4" y="109.8" width="1.2" height="1" fill="#f2e2c0" opacity="0.80"/>
<rect x="94.0" y="109.8" width="1.2" height="1" fill="#f2e2c0" opacity="0.81"/>
<rect x="70.6" y="112.2" width="1.2" height="1" fill="#f2e2c0" opacity="0.87"/>
<rect x="81.0" y="112.2" width="1.2" height="1" fill="#f2e2c0" opacity="0.83"/>
<rect x="88.8" y="112.2" width="1.2" height="1" fill="#f2e2c0" opacity="0.78"/>
<rect x="96.6" y="112.2" width="1.2" height="1" fill="#f2e2c0" opacity="0.54"/>
<rect x="68.0" y="114.6" width="1.2" height="1" fill="#f2e2c0" opacity="0.41"/>
<rect x="70.6" y="114.6" width="1.2" height="1" fill="#f2e2c0" opacity="0.36"/>
<rect x="75.8" y="114.6" width="1.2" height="1" fill="#f2e2c0" opacity="0.39"/>
<rect x="78.4" y="114.6" width="1.2" height="1" fill="#f2e2c0" opacity="0.76"/>
<rect x="81.0" y="114.6" width="1.2" height="1" fill="#f2e2c0" opacity="0.60"/>
<rect x="91.4" y="114.6" width="1.2" height="1" fill="#f2e2c0" opacity="0.70"/>
<rect x="73.2" y="117.0" width="1.2" height="1" fill="#f2e2c0" opacity="0.83"/>
<rect x="78.4" y="117.0" width="1.2" height="1" fill="#f2e2c0" opacity="0.67"/>
<rect x="96.6" y="117.0" width="1.2" height="1" fill="#f2e2c0" opacity="0.55"/>
<rect x="75.8" y="119.4" width="1.2" height="1" fill="#f2e2c0" opacity="0.85"/>
<rect x="78.4" y="119.4" width="1.2" height="1" fill="#f2e2c0" opacity="0.67"/>
<rect x="88.8" y="119.4" width="1.2" height="1" fill="#f2e2c0" opacity="0.64"/>
<rect x="68.0" y="121.8" width="1.2" height="1" fill="#f2e2c0" opacity="0.76"/>
<rect x="73.2" y="121.8" width="1.2" height="1" fill="#f2e2c0" opacity="0.84"/>
<rect x="88.8" y="121.8" width="1.2" height="1" fill="#f2e2c0" opacity="0.52"/>
<rect x="91.4" y="121.8" width="1.2" height="1" fill="#f2e2c0" opacity="0.75"/>
<rect x="94.0" y="121.8" width="1.2" height="1" fill="#f2e2c0" opacity="0.65"/>
<rect x="100" y="85" width="53" height="55" fill="#a8929e"/>
<rect x="100" y="85" width="18.5" height="55" fill="#887284"/>
<rect x="100" y="85" width="53" height="1.5" fill="#b0b0c8" opacity=".6"/>
<rect x="103.6" y="87.0" width="1.2" height="1" fill="#f2e2c0" opacity="0.88"/>
<rect x="114.0" y="87.0" width="1.2" height="1" fill="#f2e2c0" opacity="0.85"/>
<rect x="129.6" y="87.0" width="1.2" height="1" fill="#f2e2c0" opacity="0.36"/>
<rect x="150.4" y="87.0" width="1.2" height="1" fill="#f2e2c0" opacity="0.70"/>
<rect x="108.8" y="89.4" width="1.2" height="1" fill="#f2e2c0" opacity="0.50"/>
<rect x="119.2" y="89.4" width="1.2" height="1" fill="#f2e2c0" opacity="0.35"/>
<rect x="121.8" y="89.4" width="1.2" height="1" fill="#f2e2c0" opacity="0.74"/>
<rect x="127.0" y="89.4" width="1.2" height="1" fill="#f2e2c0" opacity="0.49"/>
<rect x="132.2" y="89.4" width="1.2" height="1" fill="#f2e2c0" opacity="0.68"/>
<rect x="137.4" y="89.4" width="1.2" height="1" fill="#f2e2c0" opacity="0.67"/>
<rect x="150.4" y="89.4" width="1.2" height="1" fill="#f2e2c0" opacity="0.81"/>
<rect x="103.6" y="91.8" width="1.2" height="1" fill="#f2e2c0" opacity="0.87"/>
<rect x="108.8" y="91.8" width="1.2" height="1" fill="#f2e2c0" opacity="0.39"/>
<rect x="116.6" y="91.8" width="1.2" height="1" fill="#f2e2c0" opacity="0.60"/>
<rect x="124.4" y="91.8" width="1.2" height="1" fill="#f2e2c0" opacity="0.77"/>
<rect x="127.0" y="91.8" width="1.2" height="1" fill="#f2e2c0" opacity="0.46"/>
<rect x="129.6" y="91.8" width="1.2" height="1" fill="#f2e2c0" opacity="0.58"/>
<rect x="134.8" y="91.8" width="1.2" height="1" fill="#f2e2c0" opacity="0.44"/>
<rect x="137.4" y="91.8" width="1.2" height="1" fill="#f2e2c0" opacity="0.40"/>
<rect x="140.0" y="91.8" width="1.2" height="1" fill="#f2e2c0" opacity="0.52"/>
<rect x="145.2" y="91.8" width="1.2" height="1" fill="#f2e2c0" opacity="0.61"/>
<rect x="108.8" y="94.2" width="1.2" height="1" fill="#f2e2c0" opacity="0.68"/>
<rect x="111.4" y="94.2" width="1.2" height="1" fill="#f2e2c0" opacity="0.44"/>
<rect x="114.0" y="94.2" width="1.2" height="1" fill="#f2e2c0" opacity="0.74"/>
<rect x="134.8" y="94.2" width="1.2" height="1" fill="#f2e2c0" opacity="0.83"/>
<rect x="140.0" y="94.2" width="1.2" height="1" fill="#f2e2c0" opacity="0.82"/>
<rect x="106.2" y="96.6" width="1.2" height="1" fill="#f2e2c0" opacity="0.65"/>
<rect x="116.6" y="96.6" width="1.2" height="1" fill="#f2e2c0" opacity="0.55"/>
<rect x="129.6" y="96.6" width="1.2" height="1" fill="#f2e2c0" opacity="0.87"/>
<rect x="137.4" y="96.6" width="1.2" height="1" fill="#f2e2c0" opacity="0.41"/>
<rect x="145.2" y="96.6" width="1.2" height="1" fill="#f2e2c0" opacity="0.53"/>
<rect x="106.2" y="99.0" width="1.2" height="1" fill="#f2e2c0" opacity="0.64"/>
<rect x="116.6" y="99.0" width="1.2" height="1" fill="#f2e2c0" opacity="0.56"/>
<rect x="124.4" y="99.0" width="1.2" height="1" fill="#f2e2c0" opacity="0.55"/>
<rect x="137.4" y="99.0" width="1.2" height="1" fill="#f2e2c0" opacity="0.53"/>
<rect x="142.6" y="99.0" width="1.2" height="1" fill="#f2e2c0" opacity="0.73"/>
<rect x="145.2" y="99.0" width="1.2" height="1" fill="#f2e2c0" opacity="0.46"/>
<rect x="147.8" y="99.0" width="1.2" height="1" fill="#f2e2c0" opacity="0.79"/>
<rect x="150.4" y="99.0" width="1.2" height="1" fill="#f2e2c0" opacity="0.48"/>
<rect x="101.0" y="101.4" width="1.2" height="1" fill="#f2e2c0" opacity="0.50"/>
<rect x="119.2" y="101.4" width="1.2" height="1" fill="#f2e2c0" opacity="0.86"/>
<rect x="124.4" y="101.4" width="1.2" height="1" fill="#f2e2c0" opacity="0.76"/>
<rect x="132.2" y="101.4" width="1.2" height="1" fill="#f2e2c0" opacity="0.83"/>
<rect x="142.6" y="101.4" width="1.2" height="1" fill="#f2e2c0" opacity="0.38"/>
<rect x="145.2" y="101.4" width="1.2" height="1" fill="#f2e2c0" opacity="0.36"/>
<rect x="101.0" y="103.8" width="1.2" height="1" fill="#f2e2c0" opacity="0.44"/>
<rect x="103.6" y="103.8" width="1.2" height="1" fill="#f2e2c0" opacity="0.69"/>
<rect x="121.8" y="103.8" width="1.2" height="1" fill="#f2e2c0" opacity="0.48"/>
<rect x="132.2" y="103.8" width="1.2" height="1" fill="#f2e2c0" opacity="0.45"/>
<rect x="134.8" y="103.8" width="1.2" height="1" fill="#f2e2c0" opacity="0.54"/>
<rect x="140.0" y="103.8" width="1.2" height="1" fill="#f2e2c0" opacity="0.64"/>
<rect x="145.2" y="103.8" width="1.2" height="1" fill="#f2e2c0" opacity="0.59"/>
<rect x="108.8" y="106.2" width="1.2" height="1" fill="#f2e2c0" opacity="0.57"/>
<rect x="121.8" y="106.2" width="1.2" height="1" fill="#f2e2c0" opacity="0.45"/>
<rect x="129.6" y="106.2" width="1.2" height="1" fill="#f2e2c0" opacity="0.79"/>
<rect x="137.4" y="106.2" width="1.2" height="1" fill="#f2e2c0" opacity="0.79"/>
<rect x="111.4" y="108.6" width="1.2" height="1" fill="#f2e2c0" opacity="0.56"/>
<rect x="114.0" y="108.6" width="1.2" height="1" fill="#f2e2c0" opacity="0.85"/>
<rect x="129.6" y="108.6" width="1.2" height="1" fill="#f2e2c0" opacity="0.77"/>
<rect x="132.2" y="108.6" width="1.2" height="1" fill="#f2e2c0" opacity="0.69"/>
<rect x="134.8" y="108.6" width="1.2" height="1" fill="#f2e2c0" opacity="0.82"/>
<rect x="140.0" y="108.6" width="1.2" height="1" fill="#f2e2c0" opacity="0.86"/>
<rect x="142.6" y="108.6" width="1.2" height="1" fill="#f2e2c0" opacity="0.86"/>
<rect x="147.8" y="108.6" width="1.2" height="1" fill="#f2e2c0" opacity="0.77"/>
<rect x="111.4" y="111.0" width="1.2" height="1" fill="#f2e2c0" opacity="0.78"/>
<rect x="114.0" y="111.0" width="1.2" height="1" fill="#f2e2c0" opacity="0.50"/>
<rect x="116.6" y="111.0" width="1.2" height="1" fill="#f2e2c0" opacity="0.83"/>
<rect x="124.4" y="111.0" width="1.2" height="1" fill="#f2e2c0" opacity="0.75"/>
<rect x="129.6" y="111.0" width="1.2" height="1" fill="#f2e2c0" opacity="0.62"/>
<rect x="134.8" y="111.0" width="1.2" height="1" fill="#f2e2c0" opacity="0.71"/>
<rect x="137.4" y="111.0" width="1.2" height="1" fill="#f2e2c0" opacity="0.55"/>
<rect x="119.2" y="113.4" width="1.2" height="1" fill="#f2e2c0" opacity="0.76"/>
<rect x="121.8" y="113.4" width="1.2" height="1" fill="#f2e2c0" opacity="0.72"/>
<rect x="124.4" y="113.4" width="1.2" height="1" fill="#f2e2c0" opacity="0.89"/>
<rect x="132.2" y="113.4" width="1.2" height="1" fill="#f2e2c0" opacity="0.70"/>
<rect x="137.4" y="113.4" width="1.2" height="1" fill="#f2e2c0" opacity="0.80"/>
<rect x="140.0" y="113.4" width="1.2" height="1" fill="#f2e2c0" opacity="0.61"/>
<rect x="142.6" y="113.4" width="1.2" height="1" fill="#f2e2c0" opacity="0.82"/>
<rect x="147.8" y="113.4" width="1.2" height="1" fill="#f2e2c0" opacity="0.61"/>
<rect x="106.2" y="115.8" width="1.2" height="1" fill="#f2e2c0" opacity="0.86"/>
<rect x="108.8" y="115.8" width="1.2" height="1" fill="#f2e2c0" opacity="0.43"/>
<rect x="114.0" y="115.8" width="1.2" height="1" fill="#f2e2c0" opacity="0.45"/>
<rect x="119.2" y="115.8" width="1.2" height="1" fill="#f2e2c0" opacity="0.44"/>
<rect x="129.6" y="115.8" width="1.2" height="1" fill="#f2e2c0" opacity="0.85"/>
<rect x="132.2" y="115.8" width="1.2" height="1" fill="#f2e2c0" opacity="0.85"/>
<rect x="101.0" y="118.2" width="1.2" height="1" fill="#f2e2c0" opacity="0.85"/>
<rect x="111.4" y="118.2" width="1.2" height="1" fill="#f2e2c0" opacity="0.60"/>
<rect x="121.8" y="118.2" width="1.2" height="1" fill="#f2e2c0" opacity="0.73"/>
<rect x="129.6" y="118.2" width="1.2" height="1" fill="#f2e2c0" opacity="0.43"/>
<rect x="137.4" y="118.2" width="1.2" height="1" fill="#f2e2c0" opacity="0.55"/>
<rect x="147.8" y="118.2" width="1.2" height="1" fill="#f2e2c0" opacity="0.84"/>
<rect x="106.2" y="120.6" width="1.2" height="1" fill="#f2e2c0" opacity="0.67"/>
<rect x="116.6" y="120.6" width="1.2" height="1" fill="#f2e2c0" opacity="0.37"/>
<rect x="119.2" y="120.6" width="1.2" height="1" fill="#f2e2c0" opacity="0.42"/>
<rect x="121.8" y="120.6" width="1.2" height="1" fill="#f2e2c0" opacity="0.70"/>
<rect x="101.0" y="123.0" width="1.2" height="1" fill="#f2e2c0" opacity="0.88"/>
<rect x="103.6" y="123.0" width="1.2" height="1" fill="#f2e2c0" opacity="0.89"/>
<rect x="106.2" y="123.0" width="1.2" height="1" fill="#f2e2c0" opacity="0.36"/>
<rect x="111.4" y="123.0" width="1.2" height="1" fill="#f2e2c0" opacity="0.63"/>
<rect x="114.0" y="123.0" width="1.2" height="1" fill="#f2e2c0" opacity="0.81"/>
<rect x="132.2" y="123.0" width="1.2" height="1" fill="#f2e2c0" opacity="0.38"/>
<rect x="140.0" y="123.0" width="1.2" height="1" fill="#f2e2c0" opacity="0.66"/>
<rect x="142.6" y="123.0" width="1.2" height="1" fill="#f2e2c0" opacity="0.58"/>
<rect x="101.0" y="125.4" width="1.2" height="1" fill="#f2e2c0" opacity="0.46"/>
<rect x="103.6" y="125.4" width="1.2" height="1" fill="#f2e2c0" opacity="0.81"/>
<rect x="106.2" y="125.4" width="1.2" height="1" fill="#f2e2c0" opacity="0.86"/>
<rect x="108.8" y="125.4" width="1.2" height="1" fill="#f2e2c0" opacity="0.83"/>
<rect x="114.0" y="125.4" width="1.2" height="1" fill="#f2e2c0" opacity="0.88"/>
<rect x="121.8" y="125.4" width="1.2" height="1" fill="#f2e2c0" opacity="0.81"/>
<rect x="127.0" y="125.4" width="1.2" height="1" fill="#f2e2c0" opacity="0.76"/>
<rect x="129.6" y="125.4" width="1.2" height="1" fill="#f2e2c0" opacity="0.43"/>
<rect x="150.4" y="125.4" width="1.2" height="1" fill="#f2e2c0" opacity="0.75"/>
<rect x="108.8" y="127.8" width="1.2" height="1" fill="#f2e2c0" opacity="0.43"/>
<rect x="111.4" y="127.8" width="1.2" height="1" fill="#f2e2c0" opacity="0.43"/>
<rect x="119.2" y="127.8" width="1.2" height="1" fill="#f2e2c0" opacity="0.63"/>
<rect x="132.2" y="127.8" width="1.2" height="1" fill="#f2e2c0" opacity="0.38"/>
<rect x="137.4" y="127.8" width="1.2" height="1" fill="#f2e2c0" opacity="0.77"/>
<rect x="140.0" y="127.8" width="1.2" height="1" fill="#f2e2c0" opacity="0.80"/>
<rect x="142.6" y="127.8" width="1.2" height="1" fill="#f2e2c0" opacity="0.40"/>
<rect x="150.4" y="127.8" width="1.2" height="1" fill="#f2e2c0" opacity="0.77"/>
<rect x="101.0" y="130.2" width="1.2" height="1" fill="#f2e2c0" opacity="0.72"/>
<rect x="116.6" y="130.2" width="1.2" height="1" fill="#f2e2c0" opacity="0.39"/>
<rect x="119.2" y="130.2" width="1.2" height="1" fill="#f2e2c0" opacity="0.53"/>
<rect x="121.8" y="130.2" width="1.2" height="1" fill="#f2e2c0" opacity="0.71"/>
<rect x="127.0" y="130.2" width="1.2" height="1" fill="#f2e2c0" opacity="0.63"/>
<rect x="132.2" y="130.2" width="1.2" height="1" fill="#f2e2c0" opacity="0.44"/>
<rect x="134.8" y="130.2" width="1.2" height="1" fill="#f2e2c0" opacity="0.53"/>
<rect x="145.2" y="130.2" width="1.2" height="1" fill="#f2e2c0" opacity="0.37"/>
<rect x="147.8" y="130.2" width="1.2" height="1" fill="#f2e2c0" opacity="0.82"/>
<rect x="101.0" y="132.6" width="1.2" height="1" fill="#f2e2c0" opacity="0.69"/>
<rect x="103.6" y="132.6" width="1.2" height="1" fill="#f2e2c0" opacity="0.63"/>
<rect x="106.2" y="132.6" width="1.2" height="1" fill="#f2e2c0" opacity="0.41"/>
<rect x="116.6" y="132.6" width="1.2" height="1" fill="#f2e2c0" opacity="0.72"/>
<rect x="124.4" y="132.6" width="1.2" height="1" fill="#f2e2c0" opacity="0.85"/>
<rect x="127.0" y="132.6" width="1.2" height="1" fill="#f2e2c0" opacity="0.47"/>
<rect x="132.2" y="132.6" width="1.2" height="1" fill="#f2e2c0" opacity="0.40"/>
<rect x="140.0" y="132.6" width="1.2" height="1" fill="#f2e2c0" opacity="0.50"/>
<rect x="145.2" y="132.6" width="1.2" height="1" fill="#f2e2c0" opacity="0.57"/>
<rect x="101.0" y="135.0" width="1.2" height="1" fill="#f2e2c0" opacity="0.39"/>
<rect x="111.4" y="135.0" width="1.2" height="1" fill="#f2e2c0" opacity="0.63"/>
<rect x="116.6" y="135.0" width="1.2" height="1" fill="#f2e2c0" opacity="0.72"/>
<rect x="124.4" y="135.0" width="1.2" height="1" fill="#f2e2c0" opacity="0.86"/>
<rect x="132.2" y="135.0" width="1.2" height="1" fill="#f2e2c0" opacity="0.62"/>
<rect x="134.8" y="135.0" width="1.2" height="1" fill="#f2e2c0" opacity="0.73"/>
<rect x="145.2" y="135.0" width="1.2" height="1" fill="#f2e2c0" opacity="0.74"/>
<rect x="150.4" y="135.0" width="1.2" height="1" fill="#f2e2c0" opacity="0.53"/>
<rect x="101.0" y="137.4" width="1.2" height="1" fill="#f2e2c0" opacity="0.67"/>
<rect x="106.2" y="137.4" width="1.2" height="1" fill="#f2e2c0" opacity="0.73"/>
<rect x="114.0" y="137.4" width="1.2" height="1" fill="#f2e2c0" opacity="0.89"/>
<rect x="119.2" y="137.4" width="1.2" height="1" fill="#f2e2c0" opacity="0.40"/>
<rect x="129.6" y="137.4" width="1.2" height="1" fill="#f2e2c0" opacity="0.83"/>
<rect x="134.8" y="137.4" width="1.2" height="1" fill="#f2e2c0" opacity="0.56"/>
<rect x="140.0" y="137.4" width="1.2" height="1" fill="#f2e2c0" opacity="0.37"/>
<rect x="150.4" y="137.4" width="1.2" height="1" fill="#f2e2c0" opacity="0.85"/>
<polygon points="67,78 153,82 153,86 67,82" fill="#5e9cac" opacity=".75"/>
<polygon points="153,116 206,116 242,102 283,86 294,86 186,157 153,157" fill="#323c30"/>
<polygon points="283,56 298,56 294,86 280,92" fill="#38422f"/>
<polygon points="303,48 315,46 315,157 186,157 294,86" fill="#bb8c56"/>
<polygon points="300.0,80.0 301.8,81.8 198.5,157 196.0,157" fill="#f6dc90" opacity="0.9"/>
<polygon points="301.2,89.0 303.3,91.1 211.0,157 208.0,157" fill="#3a3a2c" opacity="0.6"/>
<polygon points="302.4,98.0 305.2,100.8 224.0,157 220.0,157" fill="#e8c070" opacity="0.8"/>
<polygon points="303.6,107.0 305.7,109.1 235.0,157 232.0,157" fill="#4a4030" opacity="0.55"/>
<polygon points="304.8,116.0 308.3,119.5 249.0,157 244.0,157" fill="#d8b078" opacity="0.8"/>
<polygon points="306.0,125.0 308.1,127.1 259.0,157 256.0,157" fill="#3c3a2c" opacity="0.5"/>
<polygon points="307.2,134.0 309.3,136.1 271.0,157 268.0,157" fill="#f0c878" opacity="0.8"/>
<polygon points="290,46 315,44 315,62 298,80" fill="#d8a868" opacity=".85"/>
<polygon points="298,60 315,56 315,70 300,84" fill="#f4d48c" opacity=".6"/>
<polygon points="0,104 62,117 94,157 46,157 0,122" fill="#9a96b6"/>
<rect x="56.1" y="144.6" width="3" height="1.5" fill="#c8c4e0" opacity=".5"/>
<rect x="43.2" y="148.8" width="3" height="1.5" fill="#c8c4e0" opacity=".5"/>
<rect x="46.9" y="147.9" width="3" height="1.5" fill="#c8c4e0" opacity=".5"/>
<rect x="41.8" y="117.9" width="3" height="1.5" fill="#c8c4e0" opacity=".5"/>
<rect x="38.7" y="129.3" width="3" height="1.5" fill="#c8c4e0" opacity=".5"/>
<rect x="26.9" y="124.9" width="3" height="1.5" fill="#c8c4e0" opacity=".5"/>
<rect x="38.2" y="133.5" width="3" height="1.5" fill="#c8c4e0" opacity=".5"/>
<rect x="19.5" y="121.1" width="3" height="1.5" fill="#c8c4e0" opacity=".5"/>
<rect x="37.7" y="130.2" width="3" height="1.5" fill="#c8c4e0" opacity=".5"/>
<rect x="32.2" y="136.6" width="3" height="1.5" fill="#c8c4e0" opacity=".5"/>
<rect x="17.1" y="131.3" width="3" height="1.5" fill="#c8c4e0" opacity=".5"/>
<rect x="22.9" y="140.8" width="3" height="1.5" fill="#c8c4e0" opacity=".5"/>
<rect x="50.7" y="141.2" width="3" height="1.5" fill="#c8c4e0" opacity=".5"/>
<rect x="38.6" y="120.0" width="3" height="1.5" fill="#c8c4e0" opacity=".5"/>
<rect x="65.2" y="130.4" width="3" height="1.5" fill="#c8c4e0" opacity=".5"/>
<rect x="29.4" y="121.6" width="3" height="1.5" fill="#c8c4e0" opacity=".5"/>
<rect x="31.1" y="138.3" width="3" height="1.5" fill="#c8c4e0" opacity=".5"/>
<rect x="58.2" y="129.3" width="3" height="1.5" fill="#c8c4e0" opacity=".5"/>
<rect x="52.5" y="118.5" width="3" height="1.5" fill="#c8c4e0" opacity=".5"/>
<rect x="34.4" y="124.3" width="3" height="1.5" fill="#c8c4e0" opacity=".5"/>
<rect x="24.9" y="124.4" width="3" height="1.5" fill="#c8c4e0" opacity=".5"/>
<rect x="54.1" y="139.3" width="3" height="1.5" fill="#c8c4e0" opacity=".5"/>
<rect x="18.5" y="119.4" width="3" height="1.5" fill="#c8c4e0" opacity=".5"/>
<rect x="56.0" y="136.2" width="3" height="1.5" fill="#c8c4e0" opacity=".5"/>
<rect x="49.0" y="135.4" width="3" height="1.5" fill="#c8c4e0" opacity=".5"/>
<polygon points="0,122 12,128 48,157 0,157" fill="#d8a458"/>
<polygon points="0,134 14,143 24,157 0,157" fill="#ecc474"/>
<polygon points="62,122 153,139 172,157 92,157" fill="#44445c"/>
<circle cx="125.5" cy="135.4" r="0.6" fill="#f0d8a0" opacity=".7"/>
<circle cx="98.8" cy="128.9" r="1.3" fill="#f0d8a0" opacity=".7"/>
<circle cx="112.0" cy="146.1" r="1.3" fill="#f0d8a0" opacity=".7"/>
<circle cx="134.4" cy="134.2" r="0.8" fill="#f0d8a0" opacity=".7"/>
<circle cx="78.7" cy="149.5" r="1.1" fill="#f0d8a0" opacity=".7"/>
<circle cx="109.0" cy="138.0" r="0.8" fill="#f0d8a0" opacity=".7"/>
<circle cx="109.0" cy="147.2" r="1.2" fill="#f0d8a0" opacity=".7"/>
<circle cx="137.9" cy="151.4" r="0.9" fill="#f0d8a0" opacity=".7"/>
<circle cx="103.7" cy="136.5" r="1.3" fill="#f0d8a0" opacity=".7"/>
<circle cx="84.7" cy="132.3" r="0.8" fill="#f0d8a0" opacity=".7"/>
<circle cx="143.8" cy="151.0" r="0.8" fill="#f0d8a0" opacity=".7"/>
<circle cx="138.1" cy="152.0" r="0.9" fill="#f0d8a0" opacity=".7"/>
<circle cx="85.4" cy="148.9" r="0.9" fill="#f0d8a0" opacity=".7"/>
<circle cx="79.5" cy="152.4" r="0.9" fill="#f0d8a0" opacity=".7"/>
<ellipse cx="113" cy="150" rx="11" ry="7" fill="#a8cc78" opacity=".75"/>
<ellipse cx="101" cy="153" rx="6" ry="4" fill="#c8e098" opacity=".55"/>
</g></svg>
</div>

<div class="abs tab" style="left:8px;top:191px">
  <svg class="side" width="280" height="41" viewBox="0 0 280 41"><defs><linearGradient id="tg" x1="0" y1="0" x2="0" y2="1"><stop offset="0" stop-color="#dfe8f4"/><stop offset="1" stop-color="#c2d4ec"/></linearGradient></defs><polygon points="9,41 21,0 260,0 272,41" fill="url(#tg)"/><rect x="21" y="0" width="239" height="41" fill="#5b8acb"/></svg>
  <div class="t">销售信息</div>
</div>

<div class="abs panel">
  <div class="sub"><span>销售信息</span></div>
  <table class="s">
    <colgroup><col style="width:170px"><col style="width:92px"><col style="width:170px"><col style="width:92px"><col style="width:170px"><col style="width:92px"><col style="width:170px"><col style="width:92px"></colgroup>
    <tr><td class="l">总套数：</td><td class="v">144</td><td class="l">总面积：</td><td class="v">16090.22</td><td class="l">住宅套数：</td><td class="v">144</td><td class="l l4">住宅面积：</td><td class="v">16090.22</td></tr>
    <tr><td class="l">可售总套数：</td><td class="v">67</td><td class="l">可售总面积：</td><td class="v">7273.26</td><td class="l">可售住宅套数：</td><td class="v">67</td><td class="l l4">可售住宅面积：</td><td class="v">7273.26</td></tr>
    <tr><td class="l">预定总套数：</td><td class="v">0</td><td class="l">预定总面积：</td><td class="v">0</td><td class="l">预定住宅套数：</td><td class="v">0</td><td class="l l4">预定住宅面积：</td><td class="v">0</td></tr>
    <tr><td class="l">已售总套数：</td><td class="v">77</td><td class="l">已售总面积：</td><td class="v">8816.96</td><td class="l">已售住宅套数：</td><td class="v">77</td><td class="l l4">已售住宅面积：</td><td class="v">8816.96</td></tr>
    <tr><td class="l">已登记总套数：</td><td class="v">45</td><td class="l">已登记总面积：</td><td class="v">5136.31</td><td class="l">已登记住宅套数：</td><td class="v">45</td><td class="l l4">已登记住宅面积：</td><td class="v">5136.31</td></tr>
    <tr><td class="l">合同撤销总套数：</td><td class="v"></td><td class="l">定金逾期总次数：</td><td class="v"></td><td class="l"></td><td class="v"></td><td class="l l4"></td><td class="v"></td></tr>
  </table>
</div>

<div class="abs tab" style="left:8px;top:484px">
  <svg class="side" width="280" height="41" viewBox="0 0 280 41"><rect x="9" y="0" width="267" height="41" fill="#fff"/><polygon points="9,41 21,0 260,0 272,41" fill="url(#tg)"/><polygon points="272,41 276,41 276,20" fill="#d2deef"/><rect x="21" y="0" width="239" height="41" fill="#7ab0ae"/></svg>
  <div class="t">开盘单元</div>
</div>

<div class="abs units">
  <table class="u">
    <colgroup><col style="width:115px"><col style="width:283px"><col style="width:106px"><col style="width:84px"><col style="width:98px"><col style="width:130px"><col style="width:129px"><col style="width:93px"><col style="width:10px"></colgroup>
    <tr><th>编号</th><th>预售许可证/房地产权证</th><th>开盘日期</th><th>总套数</th><th>住宅套数</th><th>总面积</th><th>住宅面积</th><th style="padding-right:9px;border-right:none">销售状态</th><th class="sc"></th></tr>
    <tr><td class="n" style="color:#666;padding-left:9px">025892</td><td>奉贤房管(2025)预字0000340号</td><td class="n">2025-10-26</td><td class="n">144</td><td class="n">144</td><td class="n">16090.22</td><td class="n">16090.22</td><td style="color:#3c9a3c;padding-right:9px">在售</td><td class="sc"></td></tr>
  </table>
  <div class="foot"><b>销售室</b><span>注：以上数据仅供参考以实际为准</span></div>
</div>
</body></html>
